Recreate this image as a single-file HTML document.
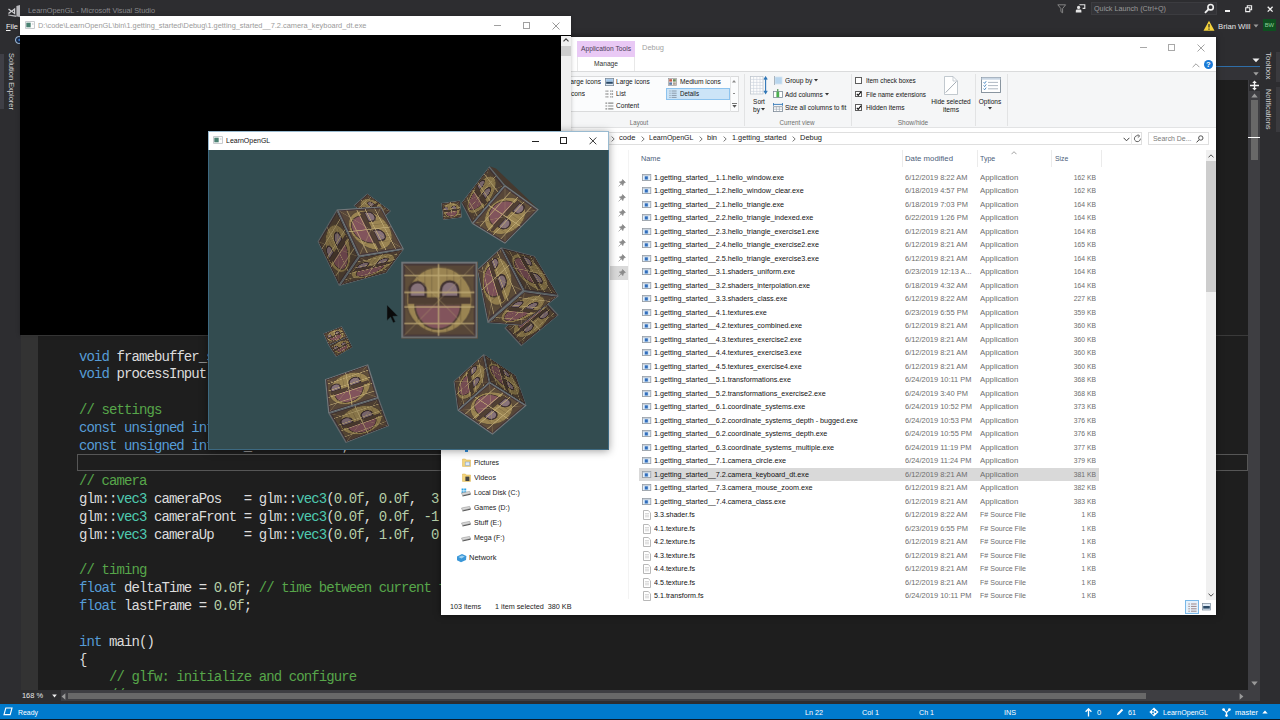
<!DOCTYPE html>
<html lang="en"><head><meta charset="utf-8"><title>LearnOpenGL - Microsoft Visual Studio</title>
<style>
html,body{margin:0;padding:0;}
body{width:1280px;height:720px;overflow:hidden;position:relative;background:#2d2d30;
 font-family:"Liberation Sans",sans-serif;}
.a{position:absolute;display:block;}
.t{position:absolute;white-space:pre;font-family:"Liberation Sans",sans-serif;}
.rot{transform-origin:0 0;transform:rotate(90deg);}
.code{font-family:"Liberation Mono",monospace;font-size:14px;letter-spacing:-0.911px;line-height:18px;color:#dcdcdc;}
.e{font-size:7.9px;color:#1a1a1a;}
.g{color:#6d6d6d;}
</style></head>
<body>
<svg class="a" style="left:8px;top:4.5px;" width="13" height="13" viewBox="0 0 13 13"><path d="M0.5 4.1 L3.4 6.3 L0.5 8.5" fill="none" stroke="#cfcfd2" stroke-width="1.3"/><path d="M6.6 4 L3.7 6.3 L6.6 8.6 Z" fill="none" stroke="#cfcfd2" stroke-width="1.2"/><path d="M8.4 0.9 L12 0 V12.2 L8.4 11.2 Z" fill="#b9b9bd"/><path d="M0.2 9.6 L8.4 10.4 V11.9 L0.2 10.5 Z" fill="#b9b9bd"/></svg>
<span class="t" style="left:27.7px;top:5.4px;line-height:12px;color:#8a8a8d;font-size:8.0px;transform:scaleX(0.9154);transform-origin:0 50%;">LearnOpenGL - Microsoft Visual Studio</span>
<span class="t" style="left:5.8px;top:20.9px;line-height:12px;color:#f1f1f1;font-size:8.0px;transform:scaleX(0.9309);transform-origin:0 50%;"><u>F</u>ile</span>
<div class="a" style="left:15px;top:36.1px;width:7.8px;height:7.8px;box-sizing:border-box;border-radius:50%;border:1.3px solid #b4d0ec;background:#16294a;"></div>
<svg class="a" style="left:16.6px;top:38.2px;" width="4" height="4" viewBox="0 0 4 4"><path d="M3.4 0.2 V3.6 L0.6 1.9 Z" fill="#3f7fd0"/></svg>
<div class="a" style="left:0px;top:53.5px;width:3.6px;height:55.5px;background:#3f3f46;"></div>
<span class="t" style="left:16.6px;top:53px;color:#d0d0d0;font-size:8.0px;line-height:12px;transform-origin:0 0;transform:rotate(90deg) scaleX(0.9356);">Solution Explorer</span>
<svg class="a" style="left:1056.5px;top:4px;" width="10" height="10" viewBox="0 0 10 10"><path d="M0.8 0.8 H8.6 L5.6 4.6 V8.8 L3.9 7.6 V4.6 Z" fill="none" stroke="#8c8c8c" stroke-width="0.9"/></svg>
<svg class="a" style="left:1075px;top:4px;" width="11" height="10" viewBox="0 0 11 10"><path d="M4.4 0.8 H9.8 V4.4 H7.6" fill="none" stroke="#e4e4e4" stroke-width="1.1"/><circle cx="3.6" cy="3.4" r="1.6" fill="#e4e4e4"/><path d="M0.8 8.6 V6.8 Q0.8 5.4 2.2 5.4 H5 Q6.4 5.4 6.4 6.8 V8.6 Z" fill="#e4e4e4"/></svg>
<div class="a" style="left:1090.5px;top:1.5px;width:126px;height:13.5px;background:#333337;box-sizing:border-box;border:1px solid #3c3c40;"></div>
<span class="t" style="left:1094px;top:2.6px;line-height:12px;color:#9a9a9a;font-size:8.0px;transform:scaleX(0.9022);transform-origin:0 50%;">Quick Launch (Ctrl+Q)</span>
<svg class="a" style="left:1204px;top:3px;" width="11" height="11" viewBox="0 0 11 11"><circle cx="6.6" cy="4.2" r="2.7" fill="none" stroke="#f1f1f1" stroke-width="1.6"/><path d="M4.6 6.2 L1 9.8" stroke="#f1f1f1" stroke-width="1.9"/></svg>
<div class="a" style="left:1224.5px;top:10.2px;width:5.8px;height:1.8px;background:#f1f1f1;"></div>
<svg class="a" style="left:1245px;top:5px;" width="8" height="8" viewBox="0 0 8 8"><path d="M0.7 2.7 H4.8 V6.6 H0.7 Z M2.3 2.5 V0.8 H6.6 V4.8 H5" fill="none" stroke="#f1f1f1" stroke-width="1.1"/></svg>
<svg class="a" style="left:1266.5px;top:5.5px;" width="7" height="7" viewBox="0 0 7 7"><path d="M0.7 0.7 L5.6 5.6 M5.6 0.7 L0.7 5.6" stroke="#f1f1f1" stroke-width="1.3"/></svg>
<svg class="a" style="left:1203px;top:20px;" width="12" height="12" viewBox="0 0 12 12"><path d="M6 0.8 L11.5 10.8 H0.5 Z" fill="#f5d33c"/><path d="M6 4 V7.6 M6 8.6 V9.8" stroke="#2a2a2a" stroke-width="1.2"/></svg>
<span class="t" style="left:1217.5px;top:20.5px;line-height:12px;color:#e6e6e6;font-size:8.0px;transform:scaleX(0.9620);transform-origin:0 50%;">Brian Will</span>
<svg class="a" style="left:1253px;top:24px;" width="6" height="4" viewBox="0 0 6 4"><path d="M0.5 0.5 H5.5 L3 3.5 Z" fill="#999"/></svg>
<div class="a" style="left:1263.2px;top:18.8px;width:12.4px;height:12.4px;background:#0e4f20;"></div>
<span class="t" style="left:1262.4px;width:14px;text-align:center;top:21.4px;line-height:8px;color:#8fd09a;font-size:5.8px;">BW</span>
<span class="t" style="left:1273.6px;top:52px;color:#d0d0d0;font-size:8.0px;line-height:12px;transform-origin:0 0;transform:rotate(90deg) scaleX(0.9973);">Toolbox</span>
<span class="t" style="left:1273.6px;top:88.5px;color:#d0d0d0;font-size:8.0px;line-height:12px;transform-origin:0 0;transform:rotate(90deg) scaleX(0.9294);">Notifications</span>
<div class="a" style="left:1276px;top:52px;width:4px;height:30px;background:#3a3a3e;"></div>
<div class="a" style="left:1276px;top:87px;width:4px;height:45px;background:#3a3a3e;"></div>
<svg class="a" style="left:1252px;top:58px;" width="8" height="5" viewBox="0 0 8 5"><path d="M0.5 0.5 H7.5 L4 4.2 Z" fill="#f1f1f1"/></svg>
<div class="a" style="left:1216px;top:65.5px;width:44px;height:1.5px;background:#2f6ea8;"></div>
<div class="a" style="left:1216px;top:67px;width:44px;height:13px;background:#333337;"></div>
<svg class="a" style="left:1253px;top:71.5px;" width="6" height="4" viewBox="0 0 6 4"><path d="M0.3 0.3 H5.7 L3 3.4 Z" fill="#a0a0a0"/></svg>
<div class="a" style="left:21px;top:335px;width:17px;height:355px;background:#333333;"></div>
<div class="a" style="left:38px;top:80px;width:1210px;height:610px;background:#1e1e1e;"></div>
<div class="a" style="left:21px;top:335px;width:1227px;height:1px;background:#3a3a3a;"></div>
<div class="a" style="left:1248px;top:80px;width:12px;height:610px;background:#3e3e42;"></div>
<svg class="a" style="left:1249px;top:80px;" width="11" height="11" viewBox="0 0 11 11"><rect width="11" height="11" fill="#2d2d30"/><path d="M5.5 0.6 L7.8 3 H3.2 Z M5.5 10.4 L7.8 8 H3.2 Z" fill="#f1f1f1"/><path d="M1 5.5 H10 M5.5 3 V8" stroke="#f1f1f1" stroke-width="1.4"/></svg>
<svg class="a" style="left:1250.5px;top:93px;" width="7" height="5" viewBox="0 0 7 5"><path d="M0.3 4.4 H6.7 L3.5 0.6 Z" fill="#999"/></svg>
<div class="a" style="left:1250.5px;top:100px;width:7px;height:60px;background:#686868;"></div>
<div class="a" style="left:1248px;top:137px;width:12px;height:1.2px;background:#ffffff;"></div>
<svg class="a" style="left:1250.5px;top:681px;" width="7" height="5" viewBox="0 0 7 5"><path d="M0.3 0.5 H6.7 L3.5 4.4 Z" fill="#999"/></svg>
<div class="a" style="left:77px;top:453.8px;width:1171px;height:17.4px;box-sizing:border-box;border:1.6px solid #565656;"></div>
<span class="t code" style="left:79px;top:347.5px;"><span style="color:#569cd6">void</span> framebuffer_size_callback(GLFWwindow* window, int width, int height);</span>
<span class="t code" style="left:79px;top:365.33px;"><span style="color:#569cd6">void</span> processInput(GLFWwindow *window);</span>
<span class="t code" style="left:79px;top:400.99px;"><span style="color:#57a64a">// settings</span></span>
<span class="t code" style="left:79px;top:418.82px;"><span style="color:#569cd6">const unsigned int</span> SCR_WIDTH = <span style="color:#b5cea8">800</span>;</span>
<span class="t code" style="left:79px;top:436.65px;"><span style="color:#569cd6">const unsigned int</span> SCR_HEIGHT = <span style="color:#b5cea8">600</span>;</span>
<span class="t code" style="left:79px;top:472.31px;"><span style="color:#57a64a">// camera</span></span>
<span class="t code" style="left:79px;top:490.14px;">glm::<span style="color:#4ec9b0">vec3</span> cameraPos   = glm::<span style="color:#4ec9b0">vec3</span>(<span style="color:#b5cea8">0.0f</span>, <span style="color:#b5cea8">0.0f</span>,  <span style="color:#b5cea8">3.0f</span>);</span>
<span class="t code" style="left:79px;top:507.97px;">glm::<span style="color:#4ec9b0">vec3</span> cameraFront = glm::<span style="color:#4ec9b0">vec3</span>(<span style="color:#b5cea8">0.0f</span>, <span style="color:#b5cea8">0.0f</span>, <span style="color:#b5cea8">-1.0f</span>);</span>
<span class="t code" style="left:79px;top:525.8px;">glm::<span style="color:#4ec9b0">vec3</span> cameraUp    = glm::<span style="color:#4ec9b0">vec3</span>(<span style="color:#b5cea8">0.0f</span>, <span style="color:#b5cea8">1.0f</span>,  <span style="color:#b5cea8">0.0f</span>);</span>
<span class="t code" style="left:79px;top:561.46px;"><span style="color:#57a64a">// timing</span></span>
<span class="t code" style="left:79px;top:579.29px;"><span style="color:#569cd6">float</span> deltaTime = <span style="color:#b5cea8">0.0f</span>; <span style="color:#57a64a">// time between current frame and last frame</span></span>
<span class="t code" style="left:79px;top:597.12px;"><span style="color:#569cd6">float</span> lastFrame = <span style="color:#b5cea8">0.0f</span>;</span>
<span class="t code" style="left:79px;top:632.78px;"><span style="color:#569cd6">int</span> main()</span>
<span class="t code" style="left:79px;top:650.61px;">{</span>
<span class="t code" style="left:79px;top:668.44px;"><span style="color:#57a64a">    // glfw: initialize and configure</span></span>
<span class="t code" style="left:79px;top:686.27px;"><span style="color:#57a64a">    // ------------------------------</span></span>
<div class="a" style="left:21px;top:690px;width:1239px;height:11px;background:#3e3e42;"></div>
<div class="a" style="left:21px;top:690px;width:40px;height:11px;background:#2d2d30;"></div>
<span class="t" style="left:22.2px;top:689.6px;line-height:12px;color:#e8e8e8;font-size:8.0px;transform:scaleX(0.9258);transform-origin:0 50%;">168 %</span>
<svg class="a" style="left:51.5px;top:694px;" width="5" height="4" viewBox="0 0 5 4"><path d="M0.2 0.4 H4.8 L2.5 3.4 Z" fill="#f1f1f1"/></svg>
<svg class="a" style="left:61px;top:692.5px;" width="5" height="7" viewBox="0 0 5 7"><path d="M4.4 0.3 V6.7 L0.6 3.5 Z" fill="#999"/></svg>
<div class="a" style="left:68px;top:692.5px;width:1078px;height:6.5px;background:#686868;"></div>
<svg class="a" style="left:1239px;top:692.5px;" width="5" height="7" viewBox="0 0 5 7"><path d="M0.6 0.3 V6.7 L4.4 3.5 Z" fill="#999"/></svg>
<div class="a" style="left:1248px;top:690px;width:12px;height:11px;background:#3e3e42;"></div>
<div class="a" style="left:0px;top:704px;width:1280px;height:15px;background:#007acc;"></div>
<div class="a" style="left:0px;top:718.5px;width:1280px;height:1.5px;background:#0a1a2a;"></div>
<svg class="a" style="left:3px;top:707px;" width="10" height="9" viewBox="0 0 10 9"><path d="M2.8 1 H9 L7.2 7.6 H1 Z" fill="none" stroke="#fff" stroke-width="1.1"/></svg>
<span class="t" style="left:17.5px;top:706.9px;line-height:12px;color:#fff;font-size:8.0px;transform:scaleX(0.8648);transform-origin:0 50%;">Ready</span>
<span class="t" style="left:805px;top:706.9px;line-height:12px;color:#fff;font-size:8.0px;transform:scaleX(0.8991);transform-origin:0 50%;">Ln 22</span>
<span class="t" style="left:862px;top:706.9px;line-height:12px;color:#fff;font-size:8.0px;transform:scaleX(0.9102);transform-origin:0 50%;">Col 1</span>
<span class="t" style="left:919px;top:706.9px;line-height:12px;color:#fff;font-size:8.0px;transform:scaleX(0.8876);transform-origin:0 50%;">Ch 1</span>
<span class="t" style="left:1004px;top:706.9px;line-height:12px;color:#fff;font-size:8.0px;transform:scaleX(0.8998);transform-origin:0 50%;">INS</span>
<svg class="a" style="left:1085px;top:707.5px;" width="7" height="9" viewBox="0 0 7 9"><path d="M3.5 0.8 V8.5 M0.6 3.8 L3.5 0.8 L6.4 3.8" fill="none" stroke="#fff" stroke-width="1.3"/></svg>
<span class="t" style="left:1096.5px;top:706.9px;line-height:12px;color:#fff;font-size:8.0px;transform:scaleX(0.9440);transform-origin:0 50%;">0</span>
<svg class="a" style="left:1116px;top:707.5px;" width="8" height="8" viewBox="0 0 8 8"><path d="M0.8 7.2 L1.6 5 L5.8 0.8 L7.2 2.2 L3 6.4 Z" fill="#fff"/></svg>
<span class="t" style="left:1128px;top:706.9px;line-height:12px;color:#fff;font-size:8.0px;transform:scaleX(0.8990);transform-origin:0 50%;">61</span>
<svg class="a" style="left:1149px;top:707px;" width="10" height="10" viewBox="0 0 10 10"><path d="M5 0.4 L9.6 5 L5 9.6 L0.4 5 Z" fill="#fff"/><circle cx="4" cy="3.8" r="1" fill="#007acc"/><circle cx="4" cy="6.6" r="1" fill="#007acc"/><circle cx="6.4" cy="5" r="1" fill="#007acc"/></svg>
<span class="t" style="left:1163px;top:706.9px;line-height:12px;color:#fff;font-size:8.0px;transform:scaleX(0.8875);transform-origin:0 50%;">LearnOpenGL</span>
<svg class="a" style="left:1222px;top:707.5px;" width="9" height="9" viewBox="0 0 9 9"><path d="M1.6 1.6 L4.5 4.6 L7.4 1.6 M4.5 4.6 V8" fill="none" stroke="#fff" stroke-width="1.3"/><circle cx="1.6" cy="1.6" r="1.4" fill="#fff"/><circle cx="7.4" cy="1.6" r="1.4" fill="#fff"/><circle cx="4.5" cy="7.6" r="1.3" fill="#fff"/></svg>
<span class="t" style="left:1235px;top:706.9px;line-height:12px;color:#fff;font-size:8.0px;transform:scaleX(0.9407);transform-origin:0 50%;">master</span>
<svg class="a" style="left:1262px;top:710px;" width="6" height="4" viewBox="0 0 6 4"><path d="M0.3 3.6 H5.7 L3 0.5 Z" fill="#fff"/></svg>
<div class="a" style="left:441px;top:37px;width:775px;height:578px;background:#ffffff;box-shadow:0 0 6px rgba(0,0,0,.55);"></div>
<div class="a" style="left:577px;top:40.5px;width:58px;height:16.5px;background:#e9c9f5;"></div>
<span class="t" style="left:571px;width:70px;text-align:center;top:42.5px;line-height:12px;color:#4a3a55;font-size:8.0px;transform:scaleX(0.8348);transform-origin:50% 50%;">Application Tools</span>
<span class="t" style="left:641.5px;top:42px;line-height:12px;color:#a2a2a2;font-size:8.0px;transform:scaleX(0.9332);transform-origin:0 50%;">Debug</span>
<div class="a" style="left:1139.5px;top:47px;width:7px;height:1px;background:#a8a8a8;"></div>
<div class="a" style="left:1167.5px;top:43.5px;width:7px;height:7px;box-sizing:border-box;border:1px solid #a8a8a8;"></div>
<svg class="a" style="left:1196.5px;top:43.5px;" width="8" height="8" viewBox="0 0 8 8"><path d="M0.5 0.5 L7.5 7.5 M7.5 0.5 L0.5 7.5" stroke="#9a9a9a" stroke-width="0.9"/></svg>
<div class="a" style="left:577px;top:57px;width:58px;height:14px;background:#fff;box-sizing:border-box;border-left:1px solid #e8e8e8;border-right:1px solid #e8e8e8;"></div>
<span class="t" style="left:576px;width:60px;text-align:center;top:58.3px;line-height:12px;color:#333;font-size:8.0px;transform:scaleX(0.8301);transform-origin:50% 50%;">Manage</span>
<svg class="a" style="left:1192px;top:62.5px;" width="8" height="5" viewBox="0 0 8 5"><path d="M0.6 4.2 L4 0.8 L7.4 4.2" fill="none" stroke="#a0a0a0" stroke-width="1"/></svg>
<div class="a" style="left:1203.5px;top:59.5px;width:9.5px;height:9.5px;background:#1979d6;border-radius:50%;"></div>
<span class="t" style="left:1203.3px;width:10px;text-align:center;top:59.9px;line-height:9px;color:#fff;font-size:7.6px;font-weight:bold;">?</span>
<div class="a" style="left:441px;top:71px;width:775px;height:57.3px;background:#f5f6f7;box-sizing:border-box;border-top:1px solid #dadbdc;border-bottom:1px solid #e2e3e4;"></div>
<div class="a" style="left:545px;top:75.5px;width:193.5px;height:36.5px;background:#fbfcfd;box-sizing:border-box;border:1px solid #dadbdc;"></div>
<div class="a" style="left:730px;top:76px;width:1px;height:35.5px;background:#e4e5e6;"></div>
<span class="t" style="left:510.8px;width:90px;text-align:right;top:76.3px;line-height:12px;color:#141414;font-size:8.0px;transform:scaleX(0.8300);transform-origin:100% 50%;">Extra large icons</span>
<span class="t" style="left:495.3px;width:90px;text-align:right;top:88.3px;line-height:12px;color:#141414;font-size:8.0px;transform:scaleX(0.8300);transform-origin:100% 50%;">Small icons</span>
<svg class="a" style="left:605px;top:77.5px;" width="9" height="8" viewBox="0 0 9 8"><rect x="0.4" y="0.4" width="8.2" height="7.2" fill="#dfeaf5" stroke="#7a8a9a" stroke-width="0.8"/><rect x="1.2" y="3.6" width="6.6" height="2.2" fill="#2c4a66"/><rect x="1.2" y="1.2" width="6.6" height="2.2" fill="#9cc3e8"/></svg>
<span class="t" style="left:615.7px;top:76.3px;line-height:12px;color:#141414;font-size:8.0px;transform:scaleX(0.8148);transform-origin:0 50%;">Large icons</span>
<svg class="a" style="left:668px;top:77.5px;" width="9" height="8" viewBox="0 0 9 8"><rect x="0.4" y="0.4" width="8.2" height="7.2" fill="#f3f3f3" stroke="#9a9a9a" stroke-width="0.7"/><rect x="1.2" y="1.2" width="2.8" height="2.4" fill="#c05a4a"/><rect x="5" y="1.2" width="2.8" height="2.4" fill="#6a8a5a"/><rect x="1.2" y="4.4" width="2.8" height="2.4" fill="#5a7aa8"/><rect x="5" y="4.4" width="2.8" height="2.4" fill="#b0a090"/></svg>
<span class="t" style="left:679.5px;top:76.3px;line-height:12px;color:#141414;font-size:8.0px;transform:scaleX(0.8267);transform-origin:0 50%;">Medium icons</span>
<svg class="a" style="left:605px;top:89.5px;" width="9" height="8" viewBox="0 0 9 8"><path d="M0.5 1.2 H3.5 M5.2 1.2 H8.4 M0.5 4 H3.5 M5.2 4 H8.4 M0.5 6.8 H3.5 M5.2 6.8 H8.4" stroke="#8a8a8a" stroke-width="1.3" stroke-dasharray="1.2 0.5"/></svg>
<span class="t" style="left:615.7px;top:88.3px;line-height:12px;color:#141414;font-size:8.0px;transform:scaleX(0.7872);transform-origin:0 50%;">List</span>
<div class="a" style="left:666px;top:87.5px;width:63.5px;height:12.5px;background:#cce4f7;box-sizing:border-box;border:1px solid #8dc3ee;"></div>
<svg class="a" style="left:668.5px;top:89.8px;" width="8" height="8" viewBox="0 0 8 8"><path d="M0.4 1 H1.6 M2.6 1 H7.6 M0.4 3.2 H1.6 M2.6 3.2 H7.6 M0.4 5.4 H1.6 M2.6 5.4 H7.6 M0.4 7.4 H1.6 M2.6 7.4 H7.6" stroke="#7a8796" stroke-width="0.8"/></svg>
<span class="t" style="left:679.5px;top:88.3px;line-height:12px;color:#141414;font-size:8.0px;transform:scaleX(0.7770);transform-origin:0 50%;">Details</span>
<svg class="a" style="left:605px;top:101.5px;" width="9" height="8" viewBox="0 0 9 8"><path d="M0.4 1.2 H2.2 M3.2 1.2 H8.4 M0.4 4 H2.2 M3.2 4 H8.4 M0.4 6.8 H2.2 M3.2 6.8 H8.4" stroke="#8a8a8a" stroke-width="1.2"/></svg>
<span class="t" style="left:615.7px;top:100.3px;line-height:12px;color:#141414;font-size:8.0px;transform:scaleX(0.8208);transform-origin:0 50%;">Content</span>
<svg class="a" style="left:732.2px;top:79.8px;" width="4" height="3" viewBox="0 0 4 3"><path d="M0 2.6 H4 L2 0 Z" fill="#8a8a8a"/></svg>
<div class="a" style="left:732.8px;top:93.2px;width:2.6px;height:0.9px;background:#8a8a8a;"></div>
<svg class="a" style="left:731.8px;top:103px;" width="5" height="5" viewBox="0 0 5 5"><path d="M0 0.4 H5" stroke="#555" stroke-width="0.9"/><path d="M0.3 2 H4.7 L2.5 4.8 Z" fill="#555"/></svg>
<span class="t" style="left:609px;width:60px;text-align:center;top:116.9px;line-height:12px;color:#6e6e6e;font-size:8.0px;transform:scaleX(0.7619);transform-origin:50% 50%;">Layout</span>
<div class="a" style="left:744px;top:74px;width:1px;height:52px;background:#e2e3e4;"></div>
<svg class="a" style="left:750px;top:75.5px;" width="18" height="19" viewBox="0 0 18 19"><rect x="0.4" y="0.4" width="12.6" height="17.6" fill="#fdfdfd" stroke="#b8c0c8" stroke-width="0.7"/><path d="M0.4 3.4 H13 M0.4 6.4 H13 M0.4 9.4 H13 M0.4 12.4 H13 M0.4 15.4 H13 M3.6 0.4 V18 M6.8 0.4 V18 M10 0.4 V18" stroke="#c9d2db" stroke-width="0.6"/><path d="M15.6 1.4 V17 M14 3.6 L15.6 1 L17.2 3.6 M14 14.8 L15.6 17.4 L17.2 14.8" fill="none" stroke="#2e75b6" stroke-width="1.1"/></svg>
<span class="t" style="left:738.5px;width:40px;text-align:center;top:96px;line-height:12px;color:#141414;font-size:8.0px;transform:scaleX(0.8042);transform-origin:50% 50%;">Sort</span>
<span class="t" style="left:752.6px;top:104px;line-height:12px;color:#141414;font-size:8.0px;transform:scaleX(0.8285);transform-origin:0 50%;">by</span>
<svg class="a" style="left:761.3px;top:108.39999999999999px;" width="4" height="3" viewBox="0 0 4 3"><path d="M0 0 H4 L2 2.6 Z" fill="#333"/></svg>
<svg class="a" style="left:773.5px;top:76px;" width="9" height="9" viewBox="0 0 9 9"><rect x="0.8" y="0.8" width="7.4" height="7.4" fill="#b9d6ee" stroke="#e9eef3" stroke-width="0.8"/><path d="M0.4 0 V9" stroke="#8e9aa6" stroke-width="0.8"/></svg>
<span class="t" style="left:784.6px;top:75.2px;line-height:12px;color:#141414;font-size:8.0px;transform:scaleX(0.8296);transform-origin:0 50%;">Group by</span>
<svg class="a" style="left:814.4px;top:79.2px;" width="4" height="3" viewBox="0 0 4 3"><path d="M0 0 H4 L2 2.6 Z" fill="#333"/></svg>
<svg class="a" style="left:773px;top:89px;" width="10" height="9" viewBox="0 0 10 9"><rect x="0.5" y="2.4" width="9" height="6" fill="#fff" stroke="#7d8a97" stroke-width="0.8"/><rect x="3.4" y="2.6" width="2.8" height="5.6" fill="#4caf50"/><path d="M4.8 0 V2.2" stroke="#2e7d32" stroke-width="1"/></svg>
<span class="t" style="left:784.6px;top:88.7px;line-height:12px;color:#141414;font-size:8.0px;transform:scaleX(0.8152);transform-origin:0 50%;">Add columns</span>
<svg class="a" style="left:824.6px;top:92.8px;" width="4" height="3" viewBox="0 0 4 3"><path d="M0 0 H4 L2 2.6 Z" fill="#333"/></svg>
<svg class="a" style="left:773px;top:102.5px;" width="10" height="9" viewBox="0 0 10 9"><path d="M0.4 1.4 H9.6 M0.4 0 V2.8 M9.6 0 V2.8" stroke="#2e75b6" stroke-width="0.9"/><rect x="0.5" y="3.8" width="9" height="4.8" fill="#fff" stroke="#7d8a97" stroke-width="0.8"/><path d="M3.4 3.8 V8.6 M6.4 3.8 V8.6 M0.5 6.2 H9.5" stroke="#9aa6b2" stroke-width="0.6"/></svg>
<span class="t" style="left:784.6px;top:102.1px;line-height:12px;color:#141414;font-size:8.0px;transform:scaleX(0.8158);transform-origin:0 50%;">Size all columns to fit</span>
<span class="t" style="left:757px;width:80px;text-align:center;top:116.9px;line-height:12px;color:#6e6e6e;font-size:8.0px;transform:scaleX(0.7794);transform-origin:50% 50%;">Current view</span>
<div class="a" style="left:851px;top:74px;width:1px;height:52px;background:#e2e3e4;"></div>
<div class="a" style="left:855.4px;top:77.1px;width:6.8px;height:6.8px;background:#fff;box-sizing:border-box;border:0.8px solid #5e5e5e;"></div>
<span class="t" style="left:866.3px;top:75.2px;line-height:12px;color:#141414;font-size:8.0px;transform:scaleX(0.8000);transform-origin:0 50%;">Item check boxes</span>
<div class="a" style="left:855.4px;top:90.6px;width:6.8px;height:6.8px;background:#fff;box-sizing:border-box;border:0.8px solid #5e5e5e;"></div>
<svg class="a" style="left:856.2px;top:91.2px;" width="6" height="6" viewBox="0 0 6 6"><path d="M0.8 2.8 L2.2 4.4 L5 0.9" fill="none" stroke="#111" stroke-width="1.1"/></svg>
<span class="t" style="left:866.3px;top:88.7px;line-height:12px;color:#141414;font-size:8.0px;transform:scaleX(0.7937);transform-origin:0 50%;">File name extensions</span>
<div class="a" style="left:855.4px;top:104.1px;width:6.8px;height:6.8px;background:#fff;box-sizing:border-box;border:0.8px solid #5e5e5e;"></div>
<svg class="a" style="left:856.2px;top:104.7px;" width="6" height="6" viewBox="0 0 6 6"><path d="M0.8 2.8 L2.2 4.4 L5 0.9" fill="none" stroke="#111" stroke-width="1.1"/></svg>
<span class="t" style="left:866.3px;top:102.2px;line-height:12px;color:#141414;font-size:8.0px;transform:scaleX(0.8268);transform-origin:0 50%;">Hidden items</span>
<svg class="a" style="left:943.5px;top:75.5px;" width="14" height="19" viewBox="0 0 14 19"><path d="M0.5 0.5 H9 L13.5 5 V18.5 H0.5 Z" fill="#fff" stroke="#b4bcc4" stroke-width="0.8"/><path d="M9 0.5 V5 H13.5" fill="none" stroke="#b4bcc4" stroke-width="0.7"/><path d="M1.6 16.6 L12.4 5.6" stroke="#8e98a2" stroke-width="0.8"/></svg>
<span class="t" style="left:910.7px;width:80px;text-align:center;top:96px;line-height:12px;color:#141414;font-size:8.0px;transform:scaleX(0.8149);transform-origin:50% 50%;">Hide selected</span>
<span class="t" style="left:930.7px;width:40px;text-align:center;top:104px;line-height:12px;color:#141414;font-size:8.0px;transform:scaleX(0.8371);transform-origin:50% 50%;">items</span>
<span class="t" style="left:877.7px;width:70px;text-align:center;top:116.9px;line-height:12px;color:#6e6e6e;font-size:8.0px;transform:scaleX(0.8164);transform-origin:50% 50%;">Show/hide</span>
<div class="a" style="left:975px;top:74px;width:1px;height:52px;background:#e2e3e4;"></div>
<svg class="a" style="left:981px;top:77px;" width="20" height="16" viewBox="0 0 20 16"><rect x="0.5" y="0.5" width="19" height="15" fill="#fff" stroke="#7d8a97" stroke-width="0.9"/><rect x="0.5" y="0.5" width="19" height="2.2" fill="#c9d6e4"/><path d="M7 5.4 H17 M7 8.6 H17 M7 11.8 H17" stroke="#9aa6b2" stroke-width="0.8"/><path d="M2.6 5.2 L3.6 6.4 L5.2 4.2 M2.6 8.4 L3.6 9.6 L5.2 7.4 M2.6 11.6 L3.6 12.8 L5.2 10.6" fill="none" stroke="#2e75b6" stroke-width="0.8"/></svg>
<span class="t" style="left:960.3px;width:60px;text-align:center;top:96px;line-height:12px;color:#141414;font-size:8.0px;transform:scaleX(0.8161);transform-origin:50% 50%;">Options</span>
<svg class="a" style="left:988.4px;top:107.39999999999999px;" width="4" height="3" viewBox="0 0 4 3"><path d="M0 0 H4 L2 2.6 Z" fill="#333"/></svg>
<div class="a" style="left:1007px;top:74px;width:1px;height:52px;background:#e2e3e4;"></div>
<div class="a" style="left:560px;top:131.5px;width:581.6px;height:13.8px;background:#fff;box-sizing:border-box;border:1px solid #dfdfdf;"></div>
<div class="a" style="left:1131.2px;top:132px;width:1px;height:12.8px;background:#e8e8e8;"></div>
<svg class="a" style="left:611px;top:135.6px;" width="4" height="6" viewBox="0 0 4 6"><path d="M0.6 0.6 L3.2 3 L0.6 5.4" fill="none" stroke="#6a6a6a" stroke-width="0.9"/></svg>
<span class="t" style="left:619px;top:132.4px;line-height:12px;color:#1a1a1a;font-size:8.0px;transform:scaleX(0.9453);transform-origin:0 50%;">code</span>
<svg class="a" style="left:641px;top:135.6px;" width="4" height="6" viewBox="0 0 4 6"><path d="M0.6 0.6 L3.2 3 L0.6 5.4" fill="none" stroke="#6a6a6a" stroke-width="0.9"/></svg>
<span class="t" style="left:649px;top:132.4px;line-height:12px;color:#1a1a1a;font-size:8.0px;transform:scaleX(0.8757);transform-origin:0 50%;">LearnOpenGL</span>
<svg class="a" style="left:699px;top:135.6px;" width="4" height="6" viewBox="0 0 4 6"><path d="M0.6 0.6 L3.2 3 L0.6 5.4" fill="none" stroke="#6a6a6a" stroke-width="0.9"/></svg>
<span class="t" style="left:706.8px;top:132.4px;line-height:12px;color:#1a1a1a;font-size:8.0px;transform:scaleX(0.9367);transform-origin:0 50%;">bin</span>
<svg class="a" style="left:723px;top:135.6px;" width="4" height="6" viewBox="0 0 4 6"><path d="M0.6 0.6 L3.2 3 L0.6 5.4" fill="none" stroke="#6a6a6a" stroke-width="0.9"/></svg>
<span class="t" style="left:731.5px;top:132.4px;line-height:12px;color:#1a1a1a;font-size:8.0px;transform:scaleX(0.9144);transform-origin:0 50%;">1.getting_started</span>
<svg class="a" style="left:792px;top:135.6px;" width="4" height="6" viewBox="0 0 4 6"><path d="M0.6 0.6 L3.2 3 L0.6 5.4" fill="none" stroke="#6a6a6a" stroke-width="0.9"/></svg>
<span class="t" style="left:800px;top:132.4px;line-height:12px;color:#1a1a1a;font-size:8.0px;transform:scaleX(0.9332);transform-origin:0 50%;">Debug</span>
<svg class="a" style="left:1123px;top:136.5px;" width="7" height="5" viewBox="0 0 7 5"><path d="M0.6 0.8 L3.5 3.8 L6.4 0.8" fill="none" stroke="#444" stroke-width="1"/></svg>
<svg class="a" style="left:1133px;top:134px;" width="9" height="9" viewBox="0 0 9 9"><path d="M7.4 4.6 A3 3 0 1 1 5.6 1.9" fill="none" stroke="#555" stroke-width="0.9"/><path d="M4.6 0.4 L6.8 2 L4.8 3.6" fill="none" stroke="#555" stroke-width="0.8"/></svg>
<div class="a" style="left:1148px;top:131.5px;width:61.4px;height:13.8px;background:#fff;box-sizing:border-box;border:1px solid #dfdfdf;"></div>
<span class="t" style="left:1153px;top:132.6px;line-height:12px;color:#7a7a7a;font-size:8.0px;transform:scaleX(0.8658);transform-origin:0 50%;">Search De...</span>
<svg class="a" style="left:1196px;top:134.5px;" width="8" height="8" viewBox="0 0 8 8"><circle cx="4.8" cy="3" r="2.2" fill="none" stroke="#444" stroke-width="0.9"/><path d="M3.2 4.6 L0.6 7.4" stroke="#444" stroke-width="1"/></svg>
<div class="a" style="left:609.5px;top:265.5px;width:18.5px;height:14px;background:#d9d9d9;"></div>
<svg class="a" style="left:618.2px;top:178.8px;" width="8" height="8" viewBox="0 0 8 8"><path d="M4.6 0.6 L7.4 3.4 L6.4 3.7 L5.2 5 L5 6.6 L1.4 3 L3 2.8 L4.3 1.6 Z M3 5 L0.6 7.4" fill="#8a8a8a" stroke="#8a8a8a" stroke-width="0.7"/></svg>
<svg class="a" style="left:618.2px;top:193.85000000000002px;" width="8" height="8" viewBox="0 0 8 8"><path d="M4.6 0.6 L7.4 3.4 L6.4 3.7 L5.2 5 L5 6.6 L1.4 3 L3 2.8 L4.3 1.6 Z M3 5 L0.6 7.4" fill="#8a8a8a" stroke="#8a8a8a" stroke-width="0.7"/></svg>
<svg class="a" style="left:618.2px;top:208.9px;" width="8" height="8" viewBox="0 0 8 8"><path d="M4.6 0.6 L7.4 3.4 L6.4 3.7 L5.2 5 L5 6.6 L1.4 3 L3 2.8 L4.3 1.6 Z M3 5 L0.6 7.4" fill="#8a8a8a" stroke="#8a8a8a" stroke-width="0.7"/></svg>
<svg class="a" style="left:618.2px;top:223.95000000000002px;" width="8" height="8" viewBox="0 0 8 8"><path d="M4.6 0.6 L7.4 3.4 L6.4 3.7 L5.2 5 L5 6.6 L1.4 3 L3 2.8 L4.3 1.6 Z M3 5 L0.6 7.4" fill="#8a8a8a" stroke="#8a8a8a" stroke-width="0.7"/></svg>
<svg class="a" style="left:618.2px;top:239.0px;" width="8" height="8" viewBox="0 0 8 8"><path d="M4.6 0.6 L7.4 3.4 L6.4 3.7 L5.2 5 L5 6.6 L1.4 3 L3 2.8 L4.3 1.6 Z M3 5 L0.6 7.4" fill="#8a8a8a" stroke="#8a8a8a" stroke-width="0.7"/></svg>
<svg class="a" style="left:618.2px;top:254.05px;" width="8" height="8" viewBox="0 0 8 8"><path d="M4.6 0.6 L7.4 3.4 L6.4 3.7 L5.2 5 L5 6.6 L1.4 3 L3 2.8 L4.3 1.6 Z M3 5 L0.6 7.4" fill="#8a8a8a" stroke="#8a8a8a" stroke-width="0.7"/></svg>
<svg class="a" style="left:618.2px;top:269.1px;" width="8" height="8" viewBox="0 0 8 8"><path d="M4.6 0.6 L7.4 3.4 L6.4 3.7 L5.2 5 L5 6.6 L1.4 3 L3 2.8 L4.3 1.6 Z M3 5 L0.6 7.4" fill="#8a8a8a" stroke="#8a8a8a" stroke-width="0.7"/></svg>
<div class="a" style="left:628px;top:150px;width:1px;height:449px;background:#f3f3f3;"></div>
<span class="t" style="left:640.8px;top:153px;line-height:12px;color:#4c607a;font-size:8.0px;transform:scaleX(0.9138);transform-origin:0 50%;">Name</span>
<span class="t" style="left:905px;top:153px;line-height:12px;color:#4c607a;font-size:8.0px;transform:scaleX(0.9724);transform-origin:0 50%;">Date modified</span>
<span class="t" style="left:980px;top:153px;line-height:12px;color:#4c607a;font-size:8.0px;transform:scaleX(0.8821);transform-origin:0 50%;">Type</span>
<span class="t" style="left:1055px;top:153px;line-height:12px;color:#4c607a;font-size:8.0px;transform:scaleX(0.8546);transform-origin:0 50%;">Size</span>
<div class="a" style="left:901.5px;top:150px;width:1px;height:16.5px;background:#ebebeb;"></div>
<div class="a" style="left:976.5px;top:150px;width:1px;height:16.5px;background:#ebebeb;"></div>
<div class="a" style="left:1051px;top:150px;width:1px;height:16.5px;background:#ebebeb;"></div>
<div class="a" style="left:1101px;top:150px;width:1px;height:16.5px;background:#ebebeb;"></div>
<svg class="a" style="left:1010.5px;top:150.5px;" width="6" height="4" viewBox="0 0 6 4"><path d="M0.5 3.2 L3 0.7 L5.5 3.2" fill="none" stroke="#8a8a8a" stroke-width="0.8"/></svg>
<div class="a" style="left:639px;top:468.1px;width:460px;height:13.4px;background:#d9d9d9;"></div>
<svg class="a" style="left:641.9px;top:173.8px;" width="10" height="8" viewBox="0 0 10 8"><rect x="0.45" y="0.45" width="8.3" height="6.1" fill="#e6f0fa" stroke="#9aa0a8" stroke-width="0.9"/><rect x="0.9" y="0.9" width="7.4" height="1.1" fill="#c9d3de"/><rect x="2.9" y="2.4" width="2.9" height="3" fill="#1d55a8"/><rect x="2.3" y="2.2" width="4.1" height="3.6" fill="#5a9ae0" opacity=".35"/></svg>
<span class="t" style="left:654.2px;top:171.8px;line-height:12px;color:#111;font-size:8.0px;transform:scaleX(0.9000);transform-origin:0 50%;">1.getting_started__1.1.hello_window.exe</span>
<span class="t" style="left:905px;top:171.8px;line-height:12px;color:#6d6d6d;font-size:8.0px;transform:scaleX(0.9300);transform-origin:0 50%;">6/12/2019 8:22 AM</span>
<span class="t" style="left:980px;top:171.8px;line-height:12px;color:#6d6d6d;font-size:8.0px;transform:scaleX(0.9786);transform-origin:0 50%;">Application</span>
<span class="t" style="left:1056.3px;width:40px;text-align:right;top:171.8px;line-height:12px;color:#6d6d6d;font-size:8.0px;transform:scaleX(0.8459);transform-origin:100% 50%;">162 KB</span>
<svg class="a" style="left:641.9px;top:187.3px;" width="10" height="8" viewBox="0 0 10 8"><rect x="0.45" y="0.45" width="8.3" height="6.1" fill="#e6f0fa" stroke="#9aa0a8" stroke-width="0.9"/><rect x="0.9" y="0.9" width="7.4" height="1.1" fill="#c9d3de"/><rect x="2.9" y="2.4" width="2.9" height="3" fill="#1d55a8"/><rect x="2.3" y="2.2" width="4.1" height="3.6" fill="#5a9ae0" opacity=".35"/></svg>
<span class="t" style="left:654.2px;top:185.3px;line-height:12px;color:#111;font-size:8.0px;transform:scaleX(0.9000);transform-origin:0 50%;">1.getting_started__1.2.hello_window_clear.exe</span>
<span class="t" style="left:905px;top:185.3px;line-height:12px;color:#6d6d6d;font-size:8.0px;transform:scaleX(0.9300);transform-origin:0 50%;">6/18/2019 4:57 PM</span>
<span class="t" style="left:980px;top:185.3px;line-height:12px;color:#6d6d6d;font-size:8.0px;transform:scaleX(0.9786);transform-origin:0 50%;">Application</span>
<span class="t" style="left:1056.3px;width:40px;text-align:right;top:185.3px;line-height:12px;color:#6d6d6d;font-size:8.0px;transform:scaleX(0.8459);transform-origin:100% 50%;">162 KB</span>
<svg class="a" style="left:641.9px;top:200.8px;" width="10" height="8" viewBox="0 0 10 8"><rect x="0.45" y="0.45" width="8.3" height="6.1" fill="#e6f0fa" stroke="#9aa0a8" stroke-width="0.9"/><rect x="0.9" y="0.9" width="7.4" height="1.1" fill="#c9d3de"/><rect x="2.9" y="2.4" width="2.9" height="3" fill="#1d55a8"/><rect x="2.3" y="2.2" width="4.1" height="3.6" fill="#5a9ae0" opacity=".35"/></svg>
<span class="t" style="left:654.2px;top:198.8px;line-height:12px;color:#111;font-size:8.0px;transform:scaleX(0.9000);transform-origin:0 50%;">1.getting_started__2.1.hello_triangle.exe</span>
<span class="t" style="left:905px;top:198.8px;line-height:12px;color:#6d6d6d;font-size:8.0px;transform:scaleX(0.9300);transform-origin:0 50%;">6/18/2019 7:03 PM</span>
<span class="t" style="left:980px;top:198.8px;line-height:12px;color:#6d6d6d;font-size:8.0px;transform:scaleX(0.9786);transform-origin:0 50%;">Application</span>
<span class="t" style="left:1056.3px;width:40px;text-align:right;top:198.8px;line-height:12px;color:#6d6d6d;font-size:8.0px;transform:scaleX(0.8459);transform-origin:100% 50%;">164 KB</span>
<svg class="a" style="left:641.9px;top:214.3px;" width="10" height="8" viewBox="0 0 10 8"><rect x="0.45" y="0.45" width="8.3" height="6.1" fill="#e6f0fa" stroke="#9aa0a8" stroke-width="0.9"/><rect x="0.9" y="0.9" width="7.4" height="1.1" fill="#c9d3de"/><rect x="2.9" y="2.4" width="2.9" height="3" fill="#1d55a8"/><rect x="2.3" y="2.2" width="4.1" height="3.6" fill="#5a9ae0" opacity=".35"/></svg>
<span class="t" style="left:654.2px;top:212.3px;line-height:12px;color:#111;font-size:8.0px;transform:scaleX(0.9000);transform-origin:0 50%;">1.getting_started__2.2.hello_triangle_indexed.exe</span>
<span class="t" style="left:905px;top:212.3px;line-height:12px;color:#6d6d6d;font-size:8.0px;transform:scaleX(0.9300);transform-origin:0 50%;">6/22/2019 1:26 PM</span>
<span class="t" style="left:980px;top:212.3px;line-height:12px;color:#6d6d6d;font-size:8.0px;transform:scaleX(0.9786);transform-origin:0 50%;">Application</span>
<span class="t" style="left:1056.3px;width:40px;text-align:right;top:212.3px;line-height:12px;color:#6d6d6d;font-size:8.0px;transform:scaleX(0.8459);transform-origin:100% 50%;">164 KB</span>
<svg class="a" style="left:641.9px;top:227.8px;" width="10" height="8" viewBox="0 0 10 8"><rect x="0.45" y="0.45" width="8.3" height="6.1" fill="#e6f0fa" stroke="#9aa0a8" stroke-width="0.9"/><rect x="0.9" y="0.9" width="7.4" height="1.1" fill="#c9d3de"/><rect x="2.9" y="2.4" width="2.9" height="3" fill="#1d55a8"/><rect x="2.3" y="2.2" width="4.1" height="3.6" fill="#5a9ae0" opacity=".35"/></svg>
<span class="t" style="left:654.2px;top:225.8px;line-height:12px;color:#111;font-size:8.0px;transform:scaleX(0.9000);transform-origin:0 50%;">1.getting_started__2.3.hello_triangle_exercise1.exe</span>
<span class="t" style="left:905px;top:225.8px;line-height:12px;color:#6d6d6d;font-size:8.0px;transform:scaleX(0.9300);transform-origin:0 50%;">6/12/2019 8:21 AM</span>
<span class="t" style="left:980px;top:225.8px;line-height:12px;color:#6d6d6d;font-size:8.0px;transform:scaleX(0.9786);transform-origin:0 50%;">Application</span>
<span class="t" style="left:1056.3px;width:40px;text-align:right;top:225.8px;line-height:12px;color:#6d6d6d;font-size:8.0px;transform:scaleX(0.8459);transform-origin:100% 50%;">164 KB</span>
<svg class="a" style="left:641.9px;top:241.3px;" width="10" height="8" viewBox="0 0 10 8"><rect x="0.45" y="0.45" width="8.3" height="6.1" fill="#e6f0fa" stroke="#9aa0a8" stroke-width="0.9"/><rect x="0.9" y="0.9" width="7.4" height="1.1" fill="#c9d3de"/><rect x="2.9" y="2.4" width="2.9" height="3" fill="#1d55a8"/><rect x="2.3" y="2.2" width="4.1" height="3.6" fill="#5a9ae0" opacity=".35"/></svg>
<span class="t" style="left:654.2px;top:239.3px;line-height:12px;color:#111;font-size:8.0px;transform:scaleX(0.9000);transform-origin:0 50%;">1.getting_started__2.4.hello_triangle_exercise2.exe</span>
<span class="t" style="left:905px;top:239.3px;line-height:12px;color:#6d6d6d;font-size:8.0px;transform:scaleX(0.9300);transform-origin:0 50%;">6/12/2019 8:21 AM</span>
<span class="t" style="left:980px;top:239.3px;line-height:12px;color:#6d6d6d;font-size:8.0px;transform:scaleX(0.9786);transform-origin:0 50%;">Application</span>
<span class="t" style="left:1056.3px;width:40px;text-align:right;top:239.3px;line-height:12px;color:#6d6d6d;font-size:8.0px;transform:scaleX(0.8459);transform-origin:100% 50%;">165 KB</span>
<svg class="a" style="left:641.9px;top:254.8px;" width="10" height="8" viewBox="0 0 10 8"><rect x="0.45" y="0.45" width="8.3" height="6.1" fill="#e6f0fa" stroke="#9aa0a8" stroke-width="0.9"/><rect x="0.9" y="0.9" width="7.4" height="1.1" fill="#c9d3de"/><rect x="2.9" y="2.4" width="2.9" height="3" fill="#1d55a8"/><rect x="2.3" y="2.2" width="4.1" height="3.6" fill="#5a9ae0" opacity=".35"/></svg>
<span class="t" style="left:654.2px;top:252.8px;line-height:12px;color:#111;font-size:8.0px;transform:scaleX(0.9000);transform-origin:0 50%;">1.getting_started__2.5.hello_triangle_exercise3.exe</span>
<span class="t" style="left:905px;top:252.8px;line-height:12px;color:#6d6d6d;font-size:8.0px;transform:scaleX(0.9300);transform-origin:0 50%;">6/12/2019 8:21 AM</span>
<span class="t" style="left:980px;top:252.8px;line-height:12px;color:#6d6d6d;font-size:8.0px;transform:scaleX(0.9786);transform-origin:0 50%;">Application</span>
<span class="t" style="left:1056.3px;width:40px;text-align:right;top:252.8px;line-height:12px;color:#6d6d6d;font-size:8.0px;transform:scaleX(0.8459);transform-origin:100% 50%;">164 KB</span>
<svg class="a" style="left:641.9px;top:268.3px;" width="10" height="8" viewBox="0 0 10 8"><rect x="0.45" y="0.45" width="8.3" height="6.1" fill="#e6f0fa" stroke="#9aa0a8" stroke-width="0.9"/><rect x="0.9" y="0.9" width="7.4" height="1.1" fill="#c9d3de"/><rect x="2.9" y="2.4" width="2.9" height="3" fill="#1d55a8"/><rect x="2.3" y="2.2" width="4.1" height="3.6" fill="#5a9ae0" opacity=".35"/></svg>
<span class="t" style="left:654.2px;top:266.3px;line-height:12px;color:#111;font-size:8.0px;transform:scaleX(0.9000);transform-origin:0 50%;">1.getting_started__3.1.shaders_uniform.exe</span>
<span class="t" style="left:905px;top:266.3px;line-height:12px;color:#6d6d6d;font-size:8.0px;transform:scaleX(0.9300);transform-origin:0 50%;">6/23/2019 12:13 A...</span>
<span class="t" style="left:980px;top:266.3px;line-height:12px;color:#6d6d6d;font-size:8.0px;transform:scaleX(0.9786);transform-origin:0 50%;">Application</span>
<span class="t" style="left:1056.3px;width:40px;text-align:right;top:266.3px;line-height:12px;color:#6d6d6d;font-size:8.0px;transform:scaleX(0.8459);transform-origin:100% 50%;">164 KB</span>
<svg class="a" style="left:641.9px;top:281.8px;" width="10" height="8" viewBox="0 0 10 8"><rect x="0.45" y="0.45" width="8.3" height="6.1" fill="#e6f0fa" stroke="#9aa0a8" stroke-width="0.9"/><rect x="0.9" y="0.9" width="7.4" height="1.1" fill="#c9d3de"/><rect x="2.9" y="2.4" width="2.9" height="3" fill="#1d55a8"/><rect x="2.3" y="2.2" width="4.1" height="3.6" fill="#5a9ae0" opacity=".35"/></svg>
<span class="t" style="left:654.2px;top:279.8px;line-height:12px;color:#111;font-size:8.0px;transform:scaleX(0.9000);transform-origin:0 50%;">1.getting_started__3.2.shaders_interpolation.exe</span>
<span class="t" style="left:905px;top:279.8px;line-height:12px;color:#6d6d6d;font-size:8.0px;transform:scaleX(0.9300);transform-origin:0 50%;">6/18/2019 4:32 AM</span>
<span class="t" style="left:980px;top:279.8px;line-height:12px;color:#6d6d6d;font-size:8.0px;transform:scaleX(0.9786);transform-origin:0 50%;">Application</span>
<span class="t" style="left:1056.3px;width:40px;text-align:right;top:279.8px;line-height:12px;color:#6d6d6d;font-size:8.0px;transform:scaleX(0.8459);transform-origin:100% 50%;">164 KB</span>
<svg class="a" style="left:641.9px;top:295.3px;" width="10" height="8" viewBox="0 0 10 8"><rect x="0.45" y="0.45" width="8.3" height="6.1" fill="#e6f0fa" stroke="#9aa0a8" stroke-width="0.9"/><rect x="0.9" y="0.9" width="7.4" height="1.1" fill="#c9d3de"/><rect x="2.9" y="2.4" width="2.9" height="3" fill="#1d55a8"/><rect x="2.3" y="2.2" width="4.1" height="3.6" fill="#5a9ae0" opacity=".35"/></svg>
<span class="t" style="left:654.2px;top:293.3px;line-height:12px;color:#111;font-size:8.0px;transform:scaleX(0.9000);transform-origin:0 50%;">1.getting_started__3.3.shaders_class.exe</span>
<span class="t" style="left:905px;top:293.3px;line-height:12px;color:#6d6d6d;font-size:8.0px;transform:scaleX(0.9300);transform-origin:0 50%;">6/12/2019 8:22 AM</span>
<span class="t" style="left:980px;top:293.3px;line-height:12px;color:#6d6d6d;font-size:8.0px;transform:scaleX(0.9786);transform-origin:0 50%;">Application</span>
<span class="t" style="left:1056.3px;width:40px;text-align:right;top:293.3px;line-height:12px;color:#6d6d6d;font-size:8.0px;transform:scaleX(0.8459);transform-origin:100% 50%;">227 KB</span>
<svg class="a" style="left:641.9px;top:308.8px;" width="10" height="8" viewBox="0 0 10 8"><rect x="0.45" y="0.45" width="8.3" height="6.1" fill="#e6f0fa" stroke="#9aa0a8" stroke-width="0.9"/><rect x="0.9" y="0.9" width="7.4" height="1.1" fill="#c9d3de"/><rect x="2.9" y="2.4" width="2.9" height="3" fill="#1d55a8"/><rect x="2.3" y="2.2" width="4.1" height="3.6" fill="#5a9ae0" opacity=".35"/></svg>
<span class="t" style="left:654.2px;top:306.8px;line-height:12px;color:#111;font-size:8.0px;transform:scaleX(0.9000);transform-origin:0 50%;">1.getting_started__4.1.textures.exe</span>
<span class="t" style="left:905px;top:306.8px;line-height:12px;color:#6d6d6d;font-size:8.0px;transform:scaleX(0.9300);transform-origin:0 50%;">6/23/2019 6:55 PM</span>
<span class="t" style="left:980px;top:306.8px;line-height:12px;color:#6d6d6d;font-size:8.0px;transform:scaleX(0.9786);transform-origin:0 50%;">Application</span>
<span class="t" style="left:1056.3px;width:40px;text-align:right;top:306.8px;line-height:12px;color:#6d6d6d;font-size:8.0px;transform:scaleX(0.8459);transform-origin:100% 50%;">359 KB</span>
<svg class="a" style="left:641.9px;top:322.3px;" width="10" height="8" viewBox="0 0 10 8"><rect x="0.45" y="0.45" width="8.3" height="6.1" fill="#e6f0fa" stroke="#9aa0a8" stroke-width="0.9"/><rect x="0.9" y="0.9" width="7.4" height="1.1" fill="#c9d3de"/><rect x="2.9" y="2.4" width="2.9" height="3" fill="#1d55a8"/><rect x="2.3" y="2.2" width="4.1" height="3.6" fill="#5a9ae0" opacity=".35"/></svg>
<span class="t" style="left:654.2px;top:320.3px;line-height:12px;color:#111;font-size:8.0px;transform:scaleX(0.9000);transform-origin:0 50%;">1.getting_started__4.2.textures_combined.exe</span>
<span class="t" style="left:905px;top:320.3px;line-height:12px;color:#6d6d6d;font-size:8.0px;transform:scaleX(0.9300);transform-origin:0 50%;">6/12/2019 8:21 AM</span>
<span class="t" style="left:980px;top:320.3px;line-height:12px;color:#6d6d6d;font-size:8.0px;transform:scaleX(0.9786);transform-origin:0 50%;">Application</span>
<span class="t" style="left:1056.3px;width:40px;text-align:right;top:320.3px;line-height:12px;color:#6d6d6d;font-size:8.0px;transform:scaleX(0.8459);transform-origin:100% 50%;">360 KB</span>
<svg class="a" style="left:641.9px;top:335.8px;" width="10" height="8" viewBox="0 0 10 8"><rect x="0.45" y="0.45" width="8.3" height="6.1" fill="#e6f0fa" stroke="#9aa0a8" stroke-width="0.9"/><rect x="0.9" y="0.9" width="7.4" height="1.1" fill="#c9d3de"/><rect x="2.9" y="2.4" width="2.9" height="3" fill="#1d55a8"/><rect x="2.3" y="2.2" width="4.1" height="3.6" fill="#5a9ae0" opacity=".35"/></svg>
<span class="t" style="left:654.2px;top:333.8px;line-height:12px;color:#111;font-size:8.0px;transform:scaleX(0.9000);transform-origin:0 50%;">1.getting_started__4.3.textures_exercise2.exe</span>
<span class="t" style="left:905px;top:333.8px;line-height:12px;color:#6d6d6d;font-size:8.0px;transform:scaleX(0.9300);transform-origin:0 50%;">6/12/2019 8:21 AM</span>
<span class="t" style="left:980px;top:333.8px;line-height:12px;color:#6d6d6d;font-size:8.0px;transform:scaleX(0.9786);transform-origin:0 50%;">Application</span>
<span class="t" style="left:1056.3px;width:40px;text-align:right;top:333.8px;line-height:12px;color:#6d6d6d;font-size:8.0px;transform:scaleX(0.8459);transform-origin:100% 50%;">360 KB</span>
<svg class="a" style="left:641.9px;top:349.3px;" width="10" height="8" viewBox="0 0 10 8"><rect x="0.45" y="0.45" width="8.3" height="6.1" fill="#e6f0fa" stroke="#9aa0a8" stroke-width="0.9"/><rect x="0.9" y="0.9" width="7.4" height="1.1" fill="#c9d3de"/><rect x="2.9" y="2.4" width="2.9" height="3" fill="#1d55a8"/><rect x="2.3" y="2.2" width="4.1" height="3.6" fill="#5a9ae0" opacity=".35"/></svg>
<span class="t" style="left:654.2px;top:347.3px;line-height:12px;color:#111;font-size:8.0px;transform:scaleX(0.9000);transform-origin:0 50%;">1.getting_started__4.4.textures_exercise3.exe</span>
<span class="t" style="left:905px;top:347.3px;line-height:12px;color:#6d6d6d;font-size:8.0px;transform:scaleX(0.9300);transform-origin:0 50%;">6/12/2019 8:21 AM</span>
<span class="t" style="left:980px;top:347.3px;line-height:12px;color:#6d6d6d;font-size:8.0px;transform:scaleX(0.9786);transform-origin:0 50%;">Application</span>
<span class="t" style="left:1056.3px;width:40px;text-align:right;top:347.3px;line-height:12px;color:#6d6d6d;font-size:8.0px;transform:scaleX(0.8459);transform-origin:100% 50%;">360 KB</span>
<svg class="a" style="left:641.9px;top:362.8px;" width="10" height="8" viewBox="0 0 10 8"><rect x="0.45" y="0.45" width="8.3" height="6.1" fill="#e6f0fa" stroke="#9aa0a8" stroke-width="0.9"/><rect x="0.9" y="0.9" width="7.4" height="1.1" fill="#c9d3de"/><rect x="2.9" y="2.4" width="2.9" height="3" fill="#1d55a8"/><rect x="2.3" y="2.2" width="4.1" height="3.6" fill="#5a9ae0" opacity=".35"/></svg>
<span class="t" style="left:654.2px;top:360.8px;line-height:12px;color:#111;font-size:8.0px;transform:scaleX(0.9000);transform-origin:0 50%;">1.getting_started__4.5.textures_exercise4.exe</span>
<span class="t" style="left:905px;top:360.8px;line-height:12px;color:#6d6d6d;font-size:8.0px;transform:scaleX(0.9300);transform-origin:0 50%;">6/12/2019 8:21 AM</span>
<span class="t" style="left:980px;top:360.8px;line-height:12px;color:#6d6d6d;font-size:8.0px;transform:scaleX(0.9786);transform-origin:0 50%;">Application</span>
<span class="t" style="left:1056.3px;width:40px;text-align:right;top:360.8px;line-height:12px;color:#6d6d6d;font-size:8.0px;transform:scaleX(0.8459);transform-origin:100% 50%;">360 KB</span>
<svg class="a" style="left:641.9px;top:376.3px;" width="10" height="8" viewBox="0 0 10 8"><rect x="0.45" y="0.45" width="8.3" height="6.1" fill="#e6f0fa" stroke="#9aa0a8" stroke-width="0.9"/><rect x="0.9" y="0.9" width="7.4" height="1.1" fill="#c9d3de"/><rect x="2.9" y="2.4" width="2.9" height="3" fill="#1d55a8"/><rect x="2.3" y="2.2" width="4.1" height="3.6" fill="#5a9ae0" opacity=".35"/></svg>
<span class="t" style="left:654.2px;top:374.3px;line-height:12px;color:#111;font-size:8.0px;transform:scaleX(0.9000);transform-origin:0 50%;">1.getting_started__5.1.transformations.exe</span>
<span class="t" style="left:905px;top:374.3px;line-height:12px;color:#6d6d6d;font-size:8.0px;transform:scaleX(0.9300);transform-origin:0 50%;">6/24/2019 10:11 PM</span>
<span class="t" style="left:980px;top:374.3px;line-height:12px;color:#6d6d6d;font-size:8.0px;transform:scaleX(0.9786);transform-origin:0 50%;">Application</span>
<span class="t" style="left:1056.3px;width:40px;text-align:right;top:374.3px;line-height:12px;color:#6d6d6d;font-size:8.0px;transform:scaleX(0.8459);transform-origin:100% 50%;">368 KB</span>
<svg class="a" style="left:641.9px;top:389.8px;" width="10" height="8" viewBox="0 0 10 8"><rect x="0.45" y="0.45" width="8.3" height="6.1" fill="#e6f0fa" stroke="#9aa0a8" stroke-width="0.9"/><rect x="0.9" y="0.9" width="7.4" height="1.1" fill="#c9d3de"/><rect x="2.9" y="2.4" width="2.9" height="3" fill="#1d55a8"/><rect x="2.3" y="2.2" width="4.1" height="3.6" fill="#5a9ae0" opacity=".35"/></svg>
<span class="t" style="left:654.2px;top:387.8px;line-height:12px;color:#111;font-size:8.0px;transform:scaleX(0.9000);transform-origin:0 50%;">1.getting_started__5.2.transformations_exercise2.exe</span>
<span class="t" style="left:905px;top:387.8px;line-height:12px;color:#6d6d6d;font-size:8.0px;transform:scaleX(0.9300);transform-origin:0 50%;">6/24/2019 3:40 PM</span>
<span class="t" style="left:980px;top:387.8px;line-height:12px;color:#6d6d6d;font-size:8.0px;transform:scaleX(0.9786);transform-origin:0 50%;">Application</span>
<span class="t" style="left:1056.3px;width:40px;text-align:right;top:387.8px;line-height:12px;color:#6d6d6d;font-size:8.0px;transform:scaleX(0.8459);transform-origin:100% 50%;">368 KB</span>
<svg class="a" style="left:641.9px;top:403.3px;" width="10" height="8" viewBox="0 0 10 8"><rect x="0.45" y="0.45" width="8.3" height="6.1" fill="#e6f0fa" stroke="#9aa0a8" stroke-width="0.9"/><rect x="0.9" y="0.9" width="7.4" height="1.1" fill="#c9d3de"/><rect x="2.9" y="2.4" width="2.9" height="3" fill="#1d55a8"/><rect x="2.3" y="2.2" width="4.1" height="3.6" fill="#5a9ae0" opacity=".35"/></svg>
<span class="t" style="left:654.2px;top:401.3px;line-height:12px;color:#111;font-size:8.0px;transform:scaleX(0.9000);transform-origin:0 50%;">1.getting_started__6.1.coordinate_systems.exe</span>
<span class="t" style="left:905px;top:401.3px;line-height:12px;color:#6d6d6d;font-size:8.0px;transform:scaleX(0.9300);transform-origin:0 50%;">6/24/2019 10:52 PM</span>
<span class="t" style="left:980px;top:401.3px;line-height:12px;color:#6d6d6d;font-size:8.0px;transform:scaleX(0.9786);transform-origin:0 50%;">Application</span>
<span class="t" style="left:1056.3px;width:40px;text-align:right;top:401.3px;line-height:12px;color:#6d6d6d;font-size:8.0px;transform:scaleX(0.8459);transform-origin:100% 50%;">373 KB</span>
<svg class="a" style="left:641.9px;top:416.8px;" width="10" height="8" viewBox="0 0 10 8"><rect x="0.45" y="0.45" width="8.3" height="6.1" fill="#e6f0fa" stroke="#9aa0a8" stroke-width="0.9"/><rect x="0.9" y="0.9" width="7.4" height="1.1" fill="#c9d3de"/><rect x="2.9" y="2.4" width="2.9" height="3" fill="#1d55a8"/><rect x="2.3" y="2.2" width="4.1" height="3.6" fill="#5a9ae0" opacity=".35"/></svg>
<span class="t" style="left:654.2px;top:414.8px;line-height:12px;color:#111;font-size:8.0px;transform:scaleX(0.9000);transform-origin:0 50%;">1.getting_started__6.2.coordinate_systems_depth - bugged.exe</span>
<span class="t" style="left:905px;top:414.8px;line-height:12px;color:#6d6d6d;font-size:8.0px;transform:scaleX(0.9300);transform-origin:0 50%;">6/24/2019 10:53 PM</span>
<span class="t" style="left:980px;top:414.8px;line-height:12px;color:#6d6d6d;font-size:8.0px;transform:scaleX(0.9786);transform-origin:0 50%;">Application</span>
<span class="t" style="left:1056.3px;width:40px;text-align:right;top:414.8px;line-height:12px;color:#6d6d6d;font-size:8.0px;transform:scaleX(0.8459);transform-origin:100% 50%;">376 KB</span>
<svg class="a" style="left:641.9px;top:430.3px;" width="10" height="8" viewBox="0 0 10 8"><rect x="0.45" y="0.45" width="8.3" height="6.1" fill="#e6f0fa" stroke="#9aa0a8" stroke-width="0.9"/><rect x="0.9" y="0.9" width="7.4" height="1.1" fill="#c9d3de"/><rect x="2.9" y="2.4" width="2.9" height="3" fill="#1d55a8"/><rect x="2.3" y="2.2" width="4.1" height="3.6" fill="#5a9ae0" opacity=".35"/></svg>
<span class="t" style="left:654.2px;top:428.3px;line-height:12px;color:#111;font-size:8.0px;transform:scaleX(0.9000);transform-origin:0 50%;">1.getting_started__6.2.coordinate_systems_depth.exe</span>
<span class="t" style="left:905px;top:428.3px;line-height:12px;color:#6d6d6d;font-size:8.0px;transform:scaleX(0.9300);transform-origin:0 50%;">6/24/2019 10:55 PM</span>
<span class="t" style="left:980px;top:428.3px;line-height:12px;color:#6d6d6d;font-size:8.0px;transform:scaleX(0.9786);transform-origin:0 50%;">Application</span>
<span class="t" style="left:1056.3px;width:40px;text-align:right;top:428.3px;line-height:12px;color:#6d6d6d;font-size:8.0px;transform:scaleX(0.8459);transform-origin:100% 50%;">376 KB</span>
<svg class="a" style="left:641.9px;top:443.8px;" width="10" height="8" viewBox="0 0 10 8"><rect x="0.45" y="0.45" width="8.3" height="6.1" fill="#e6f0fa" stroke="#9aa0a8" stroke-width="0.9"/><rect x="0.9" y="0.9" width="7.4" height="1.1" fill="#c9d3de"/><rect x="2.9" y="2.4" width="2.9" height="3" fill="#1d55a8"/><rect x="2.3" y="2.2" width="4.1" height="3.6" fill="#5a9ae0" opacity=".35"/></svg>
<span class="t" style="left:654.2px;top:441.8px;line-height:12px;color:#111;font-size:8.0px;transform:scaleX(0.9000);transform-origin:0 50%;">1.getting_started__6.3.coordinate_systems_multiple.exe</span>
<span class="t" style="left:905px;top:441.8px;line-height:12px;color:#6d6d6d;font-size:8.0px;transform:scaleX(0.9300);transform-origin:0 50%;">6/24/2019 11:19 PM</span>
<span class="t" style="left:980px;top:441.8px;line-height:12px;color:#6d6d6d;font-size:8.0px;transform:scaleX(0.9786);transform-origin:0 50%;">Application</span>
<span class="t" style="left:1056.3px;width:40px;text-align:right;top:441.8px;line-height:12px;color:#6d6d6d;font-size:8.0px;transform:scaleX(0.8459);transform-origin:100% 50%;">377 KB</span>
<svg class="a" style="left:641.9px;top:457.3px;" width="10" height="8" viewBox="0 0 10 8"><rect x="0.45" y="0.45" width="8.3" height="6.1" fill="#e6f0fa" stroke="#9aa0a8" stroke-width="0.9"/><rect x="0.9" y="0.9" width="7.4" height="1.1" fill="#c9d3de"/><rect x="2.9" y="2.4" width="2.9" height="3" fill="#1d55a8"/><rect x="2.3" y="2.2" width="4.1" height="3.6" fill="#5a9ae0" opacity=".35"/></svg>
<span class="t" style="left:654.2px;top:455.3px;line-height:12px;color:#111;font-size:8.0px;transform:scaleX(0.9000);transform-origin:0 50%;">1.getting_started__7.1.camera_circle.exe</span>
<span class="t" style="left:905px;top:455.3px;line-height:12px;color:#6d6d6d;font-size:8.0px;transform:scaleX(0.9300);transform-origin:0 50%;">6/24/2019 11:24 PM</span>
<span class="t" style="left:980px;top:455.3px;line-height:12px;color:#6d6d6d;font-size:8.0px;transform:scaleX(0.9786);transform-origin:0 50%;">Application</span>
<span class="t" style="left:1056.3px;width:40px;text-align:right;top:455.3px;line-height:12px;color:#6d6d6d;font-size:8.0px;transform:scaleX(0.8459);transform-origin:100% 50%;">379 KB</span>
<svg class="a" style="left:641.9px;top:470.8px;" width="10" height="8" viewBox="0 0 10 8"><rect x="0.45" y="0.45" width="8.3" height="6.1" fill="#e6f0fa" stroke="#9aa0a8" stroke-width="0.9"/><rect x="0.9" y="0.9" width="7.4" height="1.1" fill="#c9d3de"/><rect x="2.9" y="2.4" width="2.9" height="3" fill="#1d55a8"/><rect x="2.3" y="2.2" width="4.1" height="3.6" fill="#5a9ae0" opacity=".35"/></svg>
<span class="t" style="left:654.2px;top:468.8px;line-height:12px;color:#111;font-size:8.0px;transform:scaleX(0.9000);transform-origin:0 50%;">1.getting_started__7.2.camera_keyboard_dt.exe</span>
<span class="t" style="left:905px;top:468.8px;line-height:12px;color:#6d6d6d;font-size:8.0px;transform:scaleX(0.9300);transform-origin:0 50%;">6/12/2019 8:21 AM</span>
<span class="t" style="left:980px;top:468.8px;line-height:12px;color:#6d6d6d;font-size:8.0px;transform:scaleX(0.9786);transform-origin:0 50%;">Application</span>
<span class="t" style="left:1056.3px;width:40px;text-align:right;top:468.8px;line-height:12px;color:#6d6d6d;font-size:8.0px;transform:scaleX(0.8459);transform-origin:100% 50%;">381 KB</span>
<svg class="a" style="left:641.9px;top:484.3px;" width="10" height="8" viewBox="0 0 10 8"><rect x="0.45" y="0.45" width="8.3" height="6.1" fill="#e6f0fa" stroke="#9aa0a8" stroke-width="0.9"/><rect x="0.9" y="0.9" width="7.4" height="1.1" fill="#c9d3de"/><rect x="2.9" y="2.4" width="2.9" height="3" fill="#1d55a8"/><rect x="2.3" y="2.2" width="4.1" height="3.6" fill="#5a9ae0" opacity=".35"/></svg>
<span class="t" style="left:654.2px;top:482.3px;line-height:12px;color:#111;font-size:8.0px;transform:scaleX(0.9000);transform-origin:0 50%;">1.getting_started__7.3.camera_mouse_zoom.exe</span>
<span class="t" style="left:905px;top:482.3px;line-height:12px;color:#6d6d6d;font-size:8.0px;transform:scaleX(0.9300);transform-origin:0 50%;">6/12/2019 8:21 AM</span>
<span class="t" style="left:980px;top:482.3px;line-height:12px;color:#6d6d6d;font-size:8.0px;transform:scaleX(0.9786);transform-origin:0 50%;">Application</span>
<span class="t" style="left:1056.3px;width:40px;text-align:right;top:482.3px;line-height:12px;color:#6d6d6d;font-size:8.0px;transform:scaleX(0.8459);transform-origin:100% 50%;">382 KB</span>
<svg class="a" style="left:641.9px;top:497.8px;" width="10" height="8" viewBox="0 0 10 8"><rect x="0.45" y="0.45" width="8.3" height="6.1" fill="#e6f0fa" stroke="#9aa0a8" stroke-width="0.9"/><rect x="0.9" y="0.9" width="7.4" height="1.1" fill="#c9d3de"/><rect x="2.9" y="2.4" width="2.9" height="3" fill="#1d55a8"/><rect x="2.3" y="2.2" width="4.1" height="3.6" fill="#5a9ae0" opacity=".35"/></svg>
<span class="t" style="left:654.2px;top:495.8px;line-height:12px;color:#111;font-size:8.0px;transform:scaleX(0.9000);transform-origin:0 50%;">1.getting_started__7.4.camera_class.exe</span>
<span class="t" style="left:905px;top:495.8px;line-height:12px;color:#6d6d6d;font-size:8.0px;transform:scaleX(0.9300);transform-origin:0 50%;">6/12/2019 8:21 AM</span>
<span class="t" style="left:980px;top:495.8px;line-height:12px;color:#6d6d6d;font-size:8.0px;transform:scaleX(0.9786);transform-origin:0 50%;">Application</span>
<span class="t" style="left:1056.3px;width:40px;text-align:right;top:495.8px;line-height:12px;color:#6d6d6d;font-size:8.0px;transform:scaleX(0.8459);transform-origin:100% 50%;">383 KB</span>
<svg class="a" style="left:643px;top:510.29999999999995px;" width="8" height="10" viewBox="0 0 8 10"><path d="M0.5 0.5 H5.2 L7.5 2.8 V9.5 H0.5 Z" fill="#fff" stroke="#b0b0b0" stroke-width="0.9"/><path d="M2 3.6 H6 M2 5.2 H6 M2 6.8 H6" stroke="#c4c4c4" stroke-width="0.7"/></svg>
<span class="t" style="left:654px;top:509.3px;line-height:12px;color:#111;font-size:8.0px;transform:scaleX(0.8900);transform-origin:0 50%;">3.3.shader.fs</span>
<span class="t" style="left:905px;top:509.3px;line-height:12px;color:#6d6d6d;font-size:8.0px;transform:scaleX(0.9300);transform-origin:0 50%;">6/12/2019 8:22 AM</span>
<span class="t" style="left:980px;top:509.3px;line-height:12px;color:#6d6d6d;font-size:8.0px;transform:scaleX(0.8843);transform-origin:0 50%;">F# Source File</span>
<span class="t" style="left:1056.3px;width:40px;text-align:right;top:509.3px;line-height:12px;color:#6d6d6d;font-size:8.0px;transform:scaleX(0.8360);transform-origin:100% 50%;">1 KB</span>
<svg class="a" style="left:643px;top:523.8px;" width="8" height="10" viewBox="0 0 8 10"><path d="M0.5 0.5 H5.2 L7.5 2.8 V9.5 H0.5 Z" fill="#fff" stroke="#b0b0b0" stroke-width="0.9"/><path d="M2 3.6 H6 M2 5.2 H6 M2 6.8 H6" stroke="#c4c4c4" stroke-width="0.7"/></svg>
<span class="t" style="left:654px;top:522.8px;line-height:12px;color:#111;font-size:8.0px;transform:scaleX(0.8900);transform-origin:0 50%;">4.1.texture.fs</span>
<span class="t" style="left:905px;top:522.8px;line-height:12px;color:#6d6d6d;font-size:8.0px;transform:scaleX(0.9300);transform-origin:0 50%;">6/23/2019 6:55 PM</span>
<span class="t" style="left:980px;top:522.8px;line-height:12px;color:#6d6d6d;font-size:8.0px;transform:scaleX(0.8843);transform-origin:0 50%;">F# Source File</span>
<span class="t" style="left:1056.3px;width:40px;text-align:right;top:522.8px;line-height:12px;color:#6d6d6d;font-size:8.0px;transform:scaleX(0.8360);transform-origin:100% 50%;">1 KB</span>
<svg class="a" style="left:643px;top:537.3px;" width="8" height="10" viewBox="0 0 8 10"><path d="M0.5 0.5 H5.2 L7.5 2.8 V9.5 H0.5 Z" fill="#fff" stroke="#b0b0b0" stroke-width="0.9"/><path d="M2 3.6 H6 M2 5.2 H6 M2 6.8 H6" stroke="#c4c4c4" stroke-width="0.7"/></svg>
<span class="t" style="left:654px;top:536.3px;line-height:12px;color:#111;font-size:8.0px;transform:scaleX(0.8900);transform-origin:0 50%;">4.2.texture.fs</span>
<span class="t" style="left:905px;top:536.3px;line-height:12px;color:#6d6d6d;font-size:8.0px;transform:scaleX(0.9300);transform-origin:0 50%;">6/12/2019 8:21 AM</span>
<span class="t" style="left:980px;top:536.3px;line-height:12px;color:#6d6d6d;font-size:8.0px;transform:scaleX(0.8843);transform-origin:0 50%;">F# Source File</span>
<span class="t" style="left:1056.3px;width:40px;text-align:right;top:536.3px;line-height:12px;color:#6d6d6d;font-size:8.0px;transform:scaleX(0.8360);transform-origin:100% 50%;">1 KB</span>
<svg class="a" style="left:643px;top:550.8px;" width="8" height="10" viewBox="0 0 8 10"><path d="M0.5 0.5 H5.2 L7.5 2.8 V9.5 H0.5 Z" fill="#fff" stroke="#b0b0b0" stroke-width="0.9"/><path d="M2 3.6 H6 M2 5.2 H6 M2 6.8 H6" stroke="#c4c4c4" stroke-width="0.7"/></svg>
<span class="t" style="left:654px;top:549.8px;line-height:12px;color:#111;font-size:8.0px;transform:scaleX(0.8900);transform-origin:0 50%;">4.3.texture.fs</span>
<span class="t" style="left:905px;top:549.8px;line-height:12px;color:#6d6d6d;font-size:8.0px;transform:scaleX(0.9300);transform-origin:0 50%;">6/12/2019 8:21 AM</span>
<span class="t" style="left:980px;top:549.8px;line-height:12px;color:#6d6d6d;font-size:8.0px;transform:scaleX(0.8843);transform-origin:0 50%;">F# Source File</span>
<span class="t" style="left:1056.3px;width:40px;text-align:right;top:549.8px;line-height:12px;color:#6d6d6d;font-size:8.0px;transform:scaleX(0.8360);transform-origin:100% 50%;">1 KB</span>
<svg class="a" style="left:643px;top:564.3px;" width="8" height="10" viewBox="0 0 8 10"><path d="M0.5 0.5 H5.2 L7.5 2.8 V9.5 H0.5 Z" fill="#fff" stroke="#b0b0b0" stroke-width="0.9"/><path d="M2 3.6 H6 M2 5.2 H6 M2 6.8 H6" stroke="#c4c4c4" stroke-width="0.7"/></svg>
<span class="t" style="left:654px;top:563.3px;line-height:12px;color:#111;font-size:8.0px;transform:scaleX(0.8900);transform-origin:0 50%;">4.4.texture.fs</span>
<span class="t" style="left:905px;top:563.3px;line-height:12px;color:#6d6d6d;font-size:8.0px;transform:scaleX(0.9300);transform-origin:0 50%;">6/12/2019 8:21 AM</span>
<span class="t" style="left:980px;top:563.3px;line-height:12px;color:#6d6d6d;font-size:8.0px;transform:scaleX(0.8843);transform-origin:0 50%;">F# Source File</span>
<span class="t" style="left:1056.3px;width:40px;text-align:right;top:563.3px;line-height:12px;color:#6d6d6d;font-size:8.0px;transform:scaleX(0.8360);transform-origin:100% 50%;">1 KB</span>
<svg class="a" style="left:643px;top:577.8px;" width="8" height="10" viewBox="0 0 8 10"><path d="M0.5 0.5 H5.2 L7.5 2.8 V9.5 H0.5 Z" fill="#fff" stroke="#b0b0b0" stroke-width="0.9"/><path d="M2 3.6 H6 M2 5.2 H6 M2 6.8 H6" stroke="#c4c4c4" stroke-width="0.7"/></svg>
<span class="t" style="left:654px;top:576.8px;line-height:12px;color:#111;font-size:8.0px;transform:scaleX(0.8900);transform-origin:0 50%;">4.5.texture.fs</span>
<span class="t" style="left:905px;top:576.8px;line-height:12px;color:#6d6d6d;font-size:8.0px;transform:scaleX(0.9300);transform-origin:0 50%;">6/12/2019 8:21 AM</span>
<span class="t" style="left:980px;top:576.8px;line-height:12px;color:#6d6d6d;font-size:8.0px;transform:scaleX(0.8843);transform-origin:0 50%;">F# Source File</span>
<span class="t" style="left:1056.3px;width:40px;text-align:right;top:576.8px;line-height:12px;color:#6d6d6d;font-size:8.0px;transform:scaleX(0.8360);transform-origin:100% 50%;">1 KB</span>
<svg class="a" style="left:643px;top:591.3px;" width="8" height="10" viewBox="0 0 8 10"><path d="M0.5 0.5 H5.2 L7.5 2.8 V9.5 H0.5 Z" fill="#fff" stroke="#b0b0b0" stroke-width="0.9"/><path d="M2 3.6 H6 M2 5.2 H6 M2 6.8 H6" stroke="#c4c4c4" stroke-width="0.7"/></svg>
<span class="t" style="left:654px;top:590.3px;line-height:12px;color:#111;font-size:8.0px;transform:scaleX(0.8900);transform-origin:0 50%;">5.1.transform.fs</span>
<span class="t" style="left:905px;top:590.3px;line-height:12px;color:#6d6d6d;font-size:8.0px;transform:scaleX(0.9300);transform-origin:0 50%;">6/24/2019 10:11 PM</span>
<span class="t" style="left:980px;top:590.3px;line-height:12px;color:#6d6d6d;font-size:8.0px;transform:scaleX(0.8843);transform-origin:0 50%;">F# Source File</span>
<span class="t" style="left:1056.3px;width:40px;text-align:right;top:590.3px;line-height:12px;color:#6d6d6d;font-size:8.0px;transform:scaleX(0.8360);transform-origin:100% 50%;">1 KB</span>
<div class="a" style="left:1206px;top:150px;width:9.6px;height:449.5px;background:#f0f0f0;"></div>
<div class="a" style="left:1206px;top:160.5px;width:9.6px;height:131.7px;background:#cdcdcd;"></div>
<svg class="a" style="left:1207.8px;top:153.6px;" width="6" height="4" viewBox="0 0 6 4"><path d="M0.5 3.4 L3 0.8 L5.5 3.4" fill="none" stroke="#505050" stroke-width="1"/></svg>
<svg class="a" style="left:1207.8px;top:592.5px;" width="6" height="4" viewBox="0 0 6 4"><path d="M0.5 0.6 L3 3.2 L5.5 0.6" fill="none" stroke="#505050" stroke-width="1"/></svg>
<svg class="a" style="left:461.5px;top:458.0px;" width="9" height="9" viewBox="0 0 9 9"><path d="M0.5 1 H3.4 L4.2 2 H8.5 V8.4 H0.5 Z" fill="#f3d47c" stroke="#d9b04c" stroke-width="0.5"/><rect x="3.2" y="4" width="4.6" height="3.6" fill="#dfeaf5" stroke="#7a9ac0" stroke-width="0.5"/></svg>
<span class="t" style="left:473.7px;top:457px;line-height:12px;color:#1a1a1a;font-size:8.0px;transform:scaleX(0.8651);transform-origin:0 50%;">Pictures</span>
<svg class="a" style="left:461.5px;top:473.0px;" width="9" height="9" viewBox="0 0 9 9"><path d="M0.5 1 H3.4 L4.2 2 H8.5 V8.4 H0.5 Z" fill="#f3d47c" stroke="#d9b04c" stroke-width="0.5"/><rect x="3.4" y="3.6" width="4" height="4.4" fill="#444"/></svg>
<span class="t" style="left:473.7px;top:472px;line-height:12px;color:#1a1a1a;font-size:8.0px;transform:scaleX(0.9047);transform-origin:0 50%;">Videos</span>
<svg class="a" style="left:460.5px;top:488px;" width="10" height="9" viewBox="0 0 10 9"><path d="M0.6 0.6 H2.6 V2.6 H0.6 Z M3.2 0.6 H5.2 V2.6 H3.2 Z M0.6 3.2 H2.6 V5.2 H0.6 Z M3.2 3.2 H5.2 V5.2 H3.2 Z" fill="#2aa4e8"/><g transform="translate(0,2)"><path d="M0.5 3 L8.6 1.4 L9.6 3.6 L1.5 5.4 Z" fill="#d8d8d8" stroke="#8a8a8a" stroke-width="0.5"/><path d="M1.5 5.4 L9.6 3.6 V4.8 L1.5 6.6 Z" fill="#5a5a5a"/></g></svg>
<span class="t" style="left:473.7px;top:487px;line-height:12px;color:#1a1a1a;font-size:8.0px;transform:scaleX(0.8712);transform-origin:0 50%;">Local Disk (C:)</span>
<svg class="a" style="left:460.5px;top:505px;" width="10" height="8" viewBox="0 0 10 8"><path d="M0.5 3 L8.6 1.4 L9.6 3.6 L1.5 5.4 Z" fill="#d8d8d8" stroke="#8a8a8a" stroke-width="0.5"/><path d="M1.5 5.4 L9.6 3.6 V4.8 L1.5 6.6 Z" fill="#5a5a5a"/></svg>
<span class="t" style="left:473.7px;top:502px;line-height:12px;color:#1a1a1a;font-size:8.0px;transform:scaleX(0.8636);transform-origin:0 50%;">Games (D:)</span>
<svg class="a" style="left:460.5px;top:520px;" width="10" height="8" viewBox="0 0 10 8"><path d="M0.5 3 L8.6 1.4 L9.6 3.6 L1.5 5.4 Z" fill="#d8d8d8" stroke="#8a8a8a" stroke-width="0.5"/><path d="M1.5 5.4 L9.6 3.6 V4.8 L1.5 6.6 Z" fill="#5a5a5a"/></svg>
<span class="t" style="left:473.7px;top:517px;line-height:12px;color:#1a1a1a;font-size:8.0px;transform:scaleX(0.8753);transform-origin:0 50%;">Stuff (E:)</span>
<svg class="a" style="left:460.5px;top:535px;" width="10" height="8" viewBox="0 0 10 8"><path d="M0.5 3 L8.6 1.4 L9.6 3.6 L1.5 5.4 Z" fill="#d8d8d8" stroke="#8a8a8a" stroke-width="0.5"/><path d="M1.5 5.4 L9.6 3.6 V4.8 L1.5 6.6 Z" fill="#5a5a5a"/></svg>
<span class="t" style="left:473.7px;top:532px;line-height:12px;color:#1a1a1a;font-size:8.0px;transform:scaleX(0.8796);transform-origin:0 50%;">Mega (F:)</span>
<svg class="a" style="left:455.5px;top:552.5px;" width="11" height="10" viewBox="0 0 11 10"><path d="M1 3.4 L6 1 L10.4 3 L10 7 L5 9.2 L1 7.2 Z" fill="#3a97d8"/><path d="M2.4 4 L6 2.4 L8.8 3.6 L5.4 5.4 Z" fill="#9fd2f2"/></svg>
<span class="t" style="left:468.7px;top:551.5px;line-height:12px;color:#1a1a1a;font-size:8.0px;transform:scaleX(0.9373);transform-origin:0 50%;">Network</span>
<div class="a" style="left:464.6px;top:449.5px;width:3px;height:2.2px;background:#2f8fdc;"></div>
<span class="t" style="left:450px;top:601px;line-height:12px;color:#222;font-size:8.0px;transform:scaleX(0.8938);transform-origin:0 50%;">103 items</span>
<span class="t" style="left:494.5px;top:601px;line-height:12px;color:#222;font-size:8.0px;transform:scaleX(0.9054);transform-origin:0 50%;">1 item selected  380 KB</span>
<div class="a" style="left:1184.5px;top:599.5px;width:14.5px;height:14.5px;background:#e5f1fb;box-sizing:border-box;border:1px solid #7ab8e8;"></div>
<svg class="a" style="left:1187.5px;top:602.5px;" width="9" height="9" viewBox="0 0 9 9"><path d="M0.4 1 H1.8 M3 1 H8.6 M0.4 3.4 H1.8 M3 3.4 H8.6 M0.4 5.8 H1.8 M3 5.8 H8.6 M0.4 8.2 H1.8 M3 8.2 H8.6" stroke="#8a6a6a" stroke-width="0.8"/></svg>
<svg class="a" style="left:1201.5px;top:602.5px;" width="9" height="8" viewBox="0 0 9 8"><rect x="0.4" y="0.4" width="8.2" height="6.6" fill="#dfeaf5" stroke="#7a8a9a" stroke-width="0.7"/><rect x="1.2" y="3" width="6.6" height="2.6" fill="#2c4a66"/></svg>
<div class="a" style="left:20px;top:16.3px;width:551px;height:318.5px;background:#000;box-shadow:0 0 4px rgba(0,0,0,.25);"></div>
<div class="a" style="left:20px;top:16.3px;width:551px;height:18.7px;background:#ffffff;"></div>
<svg class="a" style="left:24.6px;top:21.1px;" width="10" height="8" viewBox="0 0 10 8"><rect x="0.4" y="0.4" width="9.2" height="7.2" rx="0.6" fill="#fdfdfd" stroke="#b4b8bc" stroke-width="0.8"/><rect x="1.3" y="1.7" width="4.4" height="4.6" fill="#4a8172"/><rect x="7.4" y="2" width="0.9" height="2" fill="#c8ccd0"/></svg>
<span class="t" style="left:37.5px;top:19.6px;line-height:12px;color:#9a9a9a;font-size:8.0px;transform:scaleX(0.9244);transform-origin:0 50%;">D:\code\LearnOpenGL\bin\1.getting_started\Debug\1.getting_started__7.2.camera_keyboard_dt.exe</span>
<div class="a" style="left:494px;top:25px;width:7px;height:1px;background:#a0a0a0;"></div>
<div class="a" style="left:522.5px;top:21.5px;width:7px;height:7px;box-sizing:border-box;border:1px solid #a0a0a0;"></div>
<svg class="a" style="left:552px;top:21.5px;" width="8" height="8" viewBox="0 0 8 8"><path d="M0.5 0.5 L7.5 7.5 M7.5 0.5 L0.5 7.5" stroke="#8e8e8e" stroke-width="0.9"/></svg>
<div class="a" style="left:560.5px;top:35.5px;width:10.5px;height:300px;background:#f0f0f0;"></div>
<svg class="a" style="left:562.8px;top:38px;" width="6" height="4" viewBox="0 0 6 4"><path d="M0.5 3.4 L3 0.8 L5.5 3.4" fill="none" stroke="#404040" stroke-width="1.1"/></svg>
<div class="a" style="left:560.5px;top:45.5px;width:10.5px;height:10.5px;background:#cdcdcd;"></div>
<div class="a" style="left:208px;top:131px;width:400.7px;height:319.3px;background:#334c50;box-shadow:0 1px 8px rgba(0,0,0,.38);"></div>
<svg class="a" width="0" height="0" style="left:0;top:0"><defs>
<g id="cf">
 <rect x="0" y="0" width="100" height="100" fill="#463838"/>
 <rect x="5" y="5" width="90" height="90" fill="#574638"/>
 <rect x="5" y="20" width="90" height="60" fill="#5f4e3a"/>
 <circle cx="50" cy="50" r="43.5" fill="#9a8452" stroke="#5a4a38" stroke-width="2.5"/>
 <path d="M22 12 V88 M31 9 V91 M40 7 V93 M60 7 V93 M69 9 V91 M78 12 V88" stroke="#5c4a32" stroke-width="1.6" opacity=".32"/>
 <path d="M11 46 V37 A10.5 10.5 0 0 1 32 37 V46 Z" fill="#87727a" stroke="#3e3030" stroke-width="3"/>
 <path d="M52 46 V37 A11.5 11.5 0 0 1 75 37 V46 Z" fill="#87727a" stroke="#3e3030" stroke-width="3"/>
 <rect x="9" y="46.5" width="82" height="8.5" fill="#503f33"/>
 <path d="M18 56 H78 A30 32 0 0 1 18 56 Z" fill="#82545c" stroke="#4a3a32" stroke-width="2"/>
 <path d="M4 4 L96 96 M96 4 L4 96" stroke="#b09c6c" stroke-width="1.3" opacity=".5"/>
 <path d="M49 3 V97 M4 18 H96 M4 40 H96 M4 59 H96 M4 80.5 H96" stroke="#c2ad78" stroke-width="2" opacity=".78"/>
 <rect x="1.2" y="1.2" width="97.6" height="97.6" fill="none" stroke="#72777a" stroke-width="2.4"/>
</g></defs></svg>
<div class="a" style="left:208px;top:150px;width:400.7px;height:300.3px;overflow:hidden;">
<div class="a" style="left:0;top:0;width:100px;height:100px;transform-origin:0 0;transform:matrix3d(0.157972,-0.116286,0,0.00013165,0.160122,0.151651,0,-0.000437151,0,0,1,0,145.6,55.6,0,1);"><svg width="100" height="100" viewBox="0 0 100 100" style="display:block"><use href="#cf"/><rect width="100" height="100" fill="#000" opacity="0.12"/></svg></div>
<div class="a" style="left:0;top:0;width:100px;height:100px;transform-origin:0 0;transform:matrix3d(0.115748,0.370681,0,-0.000577814,-0.554493,-0.0200827,0,-0.000858533,0,0,1,0,173.1,56.4,0,1);"><svg width="100" height="100" viewBox="0 0 100 100" style="display:block"><use href="#cf"/></svg></div>
<div class="a" style="left:0;top:0;width:100px;height:100px;transform-origin:0 0;transform:matrix3d(0.125332,-0.350359,0,-0.000510241,0.235904,0.466723,0,0.000167203,0,0,1,0,109.6,91.5,0,1);"><svg width="100" height="100" viewBox="0 0 100 100" style="display:block"><use href="#cf"/><rect width="100" height="100" fill="#000" opacity="0.2"/></svg></div>
<div class="a" style="left:0;top:0;width:100px;height:100px;transform-origin:0 0;transform:matrix3d(0.946291,0.174678,0,0.002527,-0.139649,0.352571,0,0.000453062,0,0,1,0,150.9,106.8,0,1);"><svg width="100" height="100" viewBox="0 0 100 100" style="display:block"><use href="#cf"/><rect width="100" height="100" fill="#000" opacity="0.15"/></svg></div>
<div class="a" style="left:0;top:0;width:100px;height:100px;transform-origin:0 0;transform:matrix3d(0.186523,-0.0251961,0,-3.87633e-06,0.0123394,0.167166,0,-2.6204e-05,0,0,1,0,233.25,53.1,0,1);"><svg width="100" height="100" viewBox="0 0 100 100" style="display:block"><use href="#cf"/><rect width="100" height="100" fill="#000" opacity="0.08"/></svg></div>
<svg class="a" style="left:0;top:0" width="401" height="301"><polygon points="281.4,16.2 288.0,18.5 330.8,59.4 297.0,35.0" fill="#46392f"/></svg><div class="a" style="left:0;top:0;width:100px;height:100px;transform-origin:0 0;transform:matrix3d(-0.175767,0.148403,0,-0.00111706,0.016343,0.43095,0,0.00117608,0,0,1,0,281.4,16.25,0,1);"><svg width="100" height="100" viewBox="0 0 100 100" style="display:block"><use href="#cf"/><rect width="100" height="100" fill="#000" opacity="0.12"/></svg></div>
<div class="a" style="left:0;top:0;width:100px;height:100px;transform-origin:0 0;transform:matrix3d(-0.0765974,0.425856,0,0.00087846,-0.540079,-0.267873,0,-0.000682085,0,0,1,0,330.75,59.4,0,1);"><svg width="100" height="100" viewBox="0 0 100 100" style="display:block"><use href="#cf"/></svg></div>
<div class="a" style="left:0;top:0;width:100px;height:100px;transform-origin:0 0;transform:matrix3d(-0.376,0.311,0,1.46034e-17,-0.168,-0.183,0,8.593e-18,0,0,1,0,350.7,165.1,0,1);"><svg width="100" height="100" viewBox="0 0 100 100" style="display:block"><use href="#cf"/><rect width="100" height="100" fill="#000" opacity="0.18"/></svg></div>
<div class="a" style="left:0;top:0;width:100px;height:100px;transform-origin:0 0;transform:matrix3d(-0.842443,-0.0398582,0,-0.00339375,-0.1766,0.252168,0,0.000235514,0,0,1,0,293.2,97.2,0,1);"><svg width="100" height="100" viewBox="0 0 100 100" style="display:block"><use href="#cf"/><rect width="100" height="100" fill="#000" opacity="0.05"/></svg></div>
<div class="a" style="left:0;top:0;width:100px;height:100px;transform-origin:0 0;transform:matrix3d(-0.0906046,0.26146,0,-0.000942699,-0.632374,-0.186584,0,-0.00101424,0,0,1,0,326.7,106,0,1);"><svg width="100" height="100" viewBox="0 0 100 100" style="display:block"><use href="#cf"/><rect width="100" height="100" fill="#000" opacity="0.22"/></svg></div>
<div class="a" style="left:0;top:0;width:100px;height:100px;transform-origin:0 0;transform:matrix3d(0.597631,0.153517,0,0.000723212,-0.0649253,0.507014,0,0.00108038,0,0,1,0,316.3,141.1,0,1);"><svg width="100" height="100" viewBox="0 0 100 100" style="display:block"><use href="#cf"/><rect width="100" height="100" fill="#000" opacity="0.1"/></svg></div>
<div class="a" style="left:0;top:0;width:100px;height:100px;transform-origin:0 0;transform:matrix3d(0.762,0,0,0,0,0.766,0,0,0,0,1,0,193.3,111.7,0,1);"><svg width="100" height="100" viewBox="0 0 100 100" style="display:block"><use href="#cf"/></svg></div>
<div class="a" style="left:0;top:0;width:100px;height:100px;transform-origin:0 0;transform:matrix3d(0.272829,0.0416606,0,0.000656416,-0.00343998,0.0290538,0,-0.000460083,0,0,1,0,115.3,183.6,0,1);"><svg width="100" height="100" viewBox="0 0 100 100" style="display:block"><use href="#cf"/><rect width="100" height="100" fill="#000" opacity="0.05"/></svg></div>
<div class="a" style="left:0;top:0;width:100px;height:100px;transform-origin:0 0;transform:matrix3d(0.484985,0.310428,0,0.00211459,0.186919,0.295994,0,0.000874367,0,0,1,0,120.5,195.5,0,1);"><svg width="100" height="100" viewBox="0 0 100 100" style="display:block"><use href="#cf"/><rect width="100" height="100" fill="#000" opacity="0.15"/></svg></div>
<div class="a" style="left:0;top:0;width:100px;height:100px;transform-origin:0 0;transform:matrix3d(0.355088,-0.25295,0,-0.0004804,-0.130576,-0.0183155,0,-0.00136086,0,0,1,0,116.9,229.3,0,1);"><svg width="100" height="100" viewBox="0 0 100 100" style="display:block"><use href="#cf"/></svg></div>
<div class="a" style="left:0;top:0;width:100px;height:100px;transform-origin:0 0;transform:matrix3d(0.728903,0.168392,0,0.00130505,0.360793,0.691199,0,0.00134926,0,0,1,0,120.2,263.3,0,1);"><svg width="100" height="100" viewBox="0 0 100 100" style="display:block"><use href="#cf"/><rect width="100" height="100" fill="#000" opacity="0.12"/></svg></div>
<div class="a" style="left:0;top:0;width:100px;height:100px;transform-origin:0 0;transform:matrix3d(-0.100589,0.151232,0,-0.00056317,-0.243922,0.327696,0,0.000236474,0,0,1,0,275.8,204,0,1);"><svg width="100" height="100" viewBox="0 0 100 100" style="display:block"><use href="#cf"/><rect width="100" height="100" fill="#000" opacity="0.1"/></svg></div>
<div class="a" style="left:0;top:0;width:100px;height:100px;transform-origin:0 0;transform:matrix3d(-0.337302,-0.0544455,0,-0.00139454,-0.444546,-0.305383,0,-0.000447955,0,0,1,0,307.9,225.4,0,1);"><svg width="100" height="100" viewBox="0 0 100 100" style="display:block"><use href="#cf"/><rect width="100" height="100" fill="#000" opacity="0.25"/></svg></div>
<div class="a" style="left:0;top:0;width:100px;height:100px;transform-origin:0 0;transform:matrix3d(-0.296708,0.335324,0,0.000155685,-0.24235,-0.128743,0,0.000453303,0,0,1,0,318.6,255.6,0,1);"><svg width="100" height="100" viewBox="0 0 100 100" style="display:block"><use href="#cf"/></svg></div>
<svg class="a" style="left:178.3px;top:153.5px;" width="14" height="20" viewBox="0 0 14 20"><path d="M1 1 l0 15.5 l3.6 -3.4 l2.6 5.6 l2.2 -1 l-2.6 -5.4 l5 -0.2 Z" fill="#0a0a0a" stroke="#2c4347" stroke-width="0.5"/></svg>
</div>
<div class="a" style="left:208px;top:131px;width:400.7px;height:19px;background:#ffffff;"></div>
<svg class="a" style="left:212.8px;top:136px;" width="10" height="8" viewBox="0 0 10 8"><rect x="0.4" y="0.4" width="9.2" height="7.2" rx="0.6" fill="#fdfdfd" stroke="#b4b8bc" stroke-width="0.8"/><rect x="1.3" y="1.7" width="4.4" height="4.6" fill="#4a8172"/><rect x="7.4" y="2" width="0.9" height="2" fill="#c8ccd0"/></svg>
<span class="t" style="left:225.6px;top:134.7px;line-height:12px;color:#111;font-size:8.0px;transform:scaleX(0.8717);transform-origin:0 50%;">LearnOpenGL</span>
<div class="a" style="left:531.5px;top:140.5px;width:7px;height:1px;background:#222;"></div>
<div class="a" style="left:560.3px;top:137px;width:7px;height:7px;box-sizing:border-box;border:1px solid #222;"></div>
<svg class="a" style="left:589.3px;top:137px;" width="8" height="8" viewBox="0 0 8 8"><path d="M0.5 0.5 L7.3 7.3 M7.3 0.5 L0.5 7.3" stroke="#222" stroke-width="0.9"/></svg>
<div class="a" style="left:208px;top:131px;width:400.7px;height:319.3px;box-sizing:border-box;border:1px solid rgba(70,130,170,.55);"></div>
</body></html>
